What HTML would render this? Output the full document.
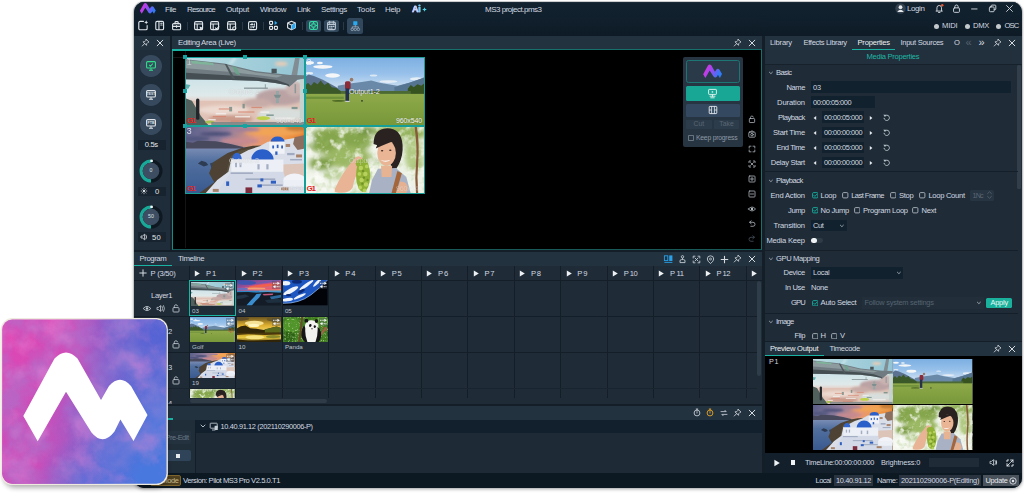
<!DOCTYPE html>
<html><head><meta charset="utf-8"><title>Pilot MS3</title>
<style>
html,body{margin:0;padding:0;background:#fff;}
body{width:1024px;height:498px;overflow:hidden;position:relative;font-family:"Liberation Sans",sans-serif;}
#win{position:absolute;left:134px;top:2px;width:888px;height:486px;border-radius:10px;background:#1b2733;overflow:hidden;box-shadow:0 0 0 1px rgba(185,188,190,.75),0 1.5px 3px .5px rgba(0,0,0,.22);}
#in{position:absolute;left:-134px;top:-2px;width:1024px;height:498px;}
#in div,#in span,#in svg,#ov>div,#ov>svg,#ov>span{position:absolute;}
.t{white-space:nowrap;display:block;}
#ov{position:absolute;left:0;top:0;}
</style></head><body>
<svg width="0" height="0" style="position:absolute"><defs>
<filter id="b1" x="-20%" y="-20%" width="140%" height="140%"><feGaussianBlur stdDeviation="0.8"/></filter>
<filter id="b2" x="-20%" y="-20%" width="140%" height="140%"><feGaussianBlur stdDeviation="2"/></filter>
<filter id="b3" x="-20%" y="-20%" width="140%" height="140%"><feGaussianBlur stdDeviation="3.5"/></filter>
<filter id="fol" x="0" y="0" width="100%" height="100%"><feTurbulence type="fractalNoise" baseFrequency="0.07" numOctaves="3" seed="4"/><feColorMatrix type="matrix" values="0 0 0 0 .36  0 0 0 0 .52  0 0 0 0 .18  3.5 0 0 0 -1.700"/></filter>
<filter id="fol2" x="0" y="0" width="100%" height="100%"><feTurbulence type="fractalNoise" baseFrequency="0.09" numOctaves="3" seed="11"/><feColorMatrix type="matrix" values="0 0 0 0 .97  0 0 0 0 .98  0 0 0 0 .94  0 3.500 0 0 -1.750"/></filter>
<filter id="fol3" x="0" y="0" width="100%" height="100%"><feTurbulence type="fractalNoise" baseFrequency="0.12" numOctaves="2" seed="5"/><feColorMatrix type="matrix" values="0 0 0 0 .12  0 0 0 0 .3  0 0 0 0 .06  3.5 0 0 0 -1.700"/></filter>
<filter id="fol4" x="0" y="0" width="100%" height="100%"><feTurbulence type="fractalNoise" baseFrequency="0.16" numOctaves="2" seed="19"/><feColorMatrix type="matrix" values="0 0 0 0 .8  0 0 0 0 .95  0 0 0 0 .6  0 4 0 0 -2.300"/></filter>
<linearGradient id="gs1" x1="0" y1="0" x2="1" y2="0"><stop offset="0" stop-color="#b9dbe2"/><stop offset=".5" stop-color="#a3cfda"/><stop offset="1" stop-color="#93c4d3"/></linearGradient>
<linearGradient id="gm1" x1="0" y1="0" x2="0" y2="1"><stop offset="0" stop-color="#cfe4e9"/><stop offset=".7" stop-color="#dfe9ea"/><stop offset="1" stop-color="#e6cfc6"/></linearGradient>
<linearGradient id="gsky2" x1="0" y1="0" x2="0" y2="1"><stop offset="0" stop-color="#7cafe2"/><stop offset=".25" stop-color="#98c1ea"/><stop offset=".42" stop-color="#c4daf0"/><stop offset=".55" stop-color="#dde8f2"/></linearGradient>
<linearGradient id="ggrass" x1="0" y1="0" x2="0" y2="1"><stop offset="0" stop-color="#8ea94a"/><stop offset=".5" stop-color="#83a141"/><stop offset="1" stop-color="#779739"/></linearGradient>
<linearGradient id="gsky3" x1="0" y1="0" x2="1" y2="0.15"><stop offset="0" stop-color="#5a5f8a"/><stop offset=".35" stop-color="#8f7d9c"/><stop offset=".6" stop-color="#e4987a"/><stop offset=".8" stop-color="#f09a4c"/><stop offset="1" stop-color="#e27d30"/></linearGradient>
<linearGradient id="gsea3" x1="0" y1="0" x2="0" y2="1"><stop offset="0" stop-color="#7d8fb6"/><stop offset=".3" stop-color="#52709f"/><stop offset="1" stop-color="#39598f"/></linearGradient>
<linearGradient id="gsky5" x1="0" y1="0" x2="1" y2="1"><stop offset="0" stop-color="#2f4aa6"/><stop offset=".5" stop-color="#c9508a"/><stop offset="1" stop-color="#f3a060"/></linearGradient>
<linearGradient id="gsky7" x1="0" y1="0" x2="0" y2="1"><stop offset="0" stop-color="#6b5520"/><stop offset=".6" stop-color="#e0b030"/><stop offset="1" stop-color="#f0d060"/></linearGradient>
<linearGradient id="gwat7" x1="0" y1="0" x2="0" y2="1"><stop offset="0" stop-color="#c09a20"/><stop offset=".5" stop-color="#e8c840"/><stop offset="1" stop-color="#5a4410"/></linearGradient>
</defs></svg>
<div id="win"><div id="in">
<div style="left:134px;top:2px;width:888px;height:34px;background:linear-gradient(#12222f,#10202c 40%,#0e1b27);"></div>
<div style="left:134px;top:2px;width:888px;height:1px;background:#1b2a37;"></div>
<svg style="left:139px;top:2px;" width="18" height="13" viewBox="0 0 18 13"><defs><linearGradient id="lg1" x1="0" y1="0" x2="1" y2="1"><stop offset="0" stop-color="#e93ad0"/><stop offset=".55" stop-color="#8a4cf0"/><stop offset="1" stop-color="#2f7cf6"/></linearGradient><linearGradient id="lg2" x1="0" y1="0" x2="1" y2=".35"><stop offset="0" stop-color="#f030d2"/><stop offset=".5" stop-color="#a046f0"/><stop offset="1" stop-color="#2f7cf6"/></linearGradient></defs><path transform="translate(.9,1.100) scale(.1276,.1200) translate(-23.300,-352.500)" d="M23.300,416 L54.500,358.500 Q66,346.500 77.500,358.500 L101,400 L109,386 Q120,373.500 131,386 L147.500,415 L133.500,441 L120.400,419.600 L114.500,431.500 Q103,446.500 91.500,432.500 L66,391.800 L37.700,441.300 Z" fill="url(#lg2)"/></svg>
<span class="t" style="left:165.00px;top:4.00px;font-size:8px;line-height:12px;color:#d2d9e0;letter-spacing:-0.473px;">File</span>
<span class="t" style="left:187.00px;top:4.00px;font-size:8px;line-height:12px;color:#d2d9e0;letter-spacing:-0.780px;">Resource</span>
<span class="t" style="left:226.00px;top:4.00px;font-size:8px;line-height:12px;color:#d2d9e0;letter-spacing:-0.169px;">Output</span>
<span class="t" style="left:260.00px;top:4.00px;font-size:8px;line-height:12px;color:#d2d9e0;letter-spacing:-0.409px;">Window</span>
<span class="t" style="left:297.00px;top:4.00px;font-size:8px;line-height:12px;color:#d2d9e0;letter-spacing:-0.419px;">Link</span>
<span class="t" style="left:321.00px;top:4.00px;font-size:8px;line-height:12px;color:#d2d9e0;letter-spacing:-0.363px;">Settings</span>
<span class="t" style="left:357.00px;top:4.00px;font-size:8px;line-height:12px;color:#d2d9e0;letter-spacing:-0.135px;">Tools</span>
<span class="t" style="left:385.00px;top:4.00px;font-size:8px;line-height:12px;color:#d2d9e0;letter-spacing:-0.363px;">Help</span>
<span class="t" style="left:411.9px;top:3.4px;font-size:9px;line-height:12px;font-weight:bold;color:#c6d2fb;letter-spacing:-0.2px;-webkit-text-stroke:.3px #c6d2fb;background:linear-gradient(200deg,#d4e6fd 45%,#a98cf4 85%);-webkit-background-clip:text;background-clip:text;">A<span style="position:static;color:#5fd0f0;-webkit-text-stroke:.3px #5fd0f0;">i</span></span>
<svg style="left:421.7px;top:6.5px;" width="5" height="5" viewBox="0 0 5 5"><path d="M2.5,.2 L3.150,1.850 L4.800,2.500 L3.150,3.150 L2.500,4.800 L1.850,3.150 L.2,2.500 L1.850,1.850Z" fill="#4fd0e4"/></svg>
<span class="t" style="left:485.00px;top:3.80px;font-size:8px;line-height:12px;color:#d2d9e0;letter-spacing:-0.498px;">MS3 project.pms3</span>
<svg style="left:894.7px;top:3px;" width="11" height="11" viewBox="0 0 11 11"><circle cx="5.5" cy="5.5" r="5.2" fill="#344250"/><circle cx="5.5" cy="4.2" r="1.9" fill="#e6eaee"/><path d="M2.2,9 q3.3,-4.4 6.6,0 z" fill="#e6eaee"/></svg>
<span class="t" style="left:907.00px;top:3.20px;font-size:8px;line-height:12px;color:#d2d9e0;letter-spacing:-0.415px;">Login</span>
<svg style="left:933.9px;top:3.4px;" width="11" height="11" viewBox="0 0 12 12"><path d="M3.2,8.6 v-3.4 a2.5,2.5 0 0 1 5,0 v3.4 M2.3,8.8 h6.8 M4.9,10.3 h1.6" fill="none" stroke="#d5dbe1" stroke-width="1" stroke-linecap="round" stroke-linejoin="round"/><circle cx="9" cy="2.4" r="1.3" fill="#f0552e"/></svg>
<svg style="left:951.2px;top:3.3px;" width="11" height="11" viewBox="0 0 12 12"><rect x="2.8" y="5.3" width="6.4" height="4.9" rx="1" fill="none" stroke="#d5dbe1" stroke-width="1" stroke-linecap="round" stroke-linejoin="round"/><path d="M4.2,5.2 v-1.2 a1.8,1.8 0 0 1 3.6,0 v1.2" fill="none" stroke="#d5dbe1" stroke-width="1" stroke-linecap="round" stroke-linejoin="round"/></svg>
<svg style="left:969px;top:2.6px;" width="11" height="11" viewBox="0 0 12 12"><path d="M2.8,6.5 h6" fill="none" stroke="#d5dbe1" stroke-width="1" stroke-linecap="round" stroke-linejoin="round"/></svg>
<svg style="left:986.6px;top:3.3px;" width="11" height="11" viewBox="0 0 12 12"><rect x="2.6" y="4.3" width="5.2" height="5.2" rx="1" fill="none" stroke="#d5dbe1" stroke-width="1" stroke-linecap="round" stroke-linejoin="round"/><path d="M4.6,4.1 v-1 a.8,.8 0 0 1 .8,-.8 h3.4 a.8,.8 0 0 1 .8,.8 v3.4 a.8,.8 0 0 1 -.8,.8 h-.9" fill="none" stroke="#d5dbe1" stroke-width="1" stroke-linecap="round" stroke-linejoin="round"/></svg>
<svg style="left:1004.2px;top:2.8px;" width="11" height="11" viewBox="0 0 12 12"><path d="M2.8,2.8 l6.4,6.4 M9.2,2.8 l-6.4,6.4" fill="none" stroke="#d5dbe1" stroke-width="1" stroke-linecap="round" stroke-linejoin="round"/></svg>
<div style="left:934.0px;top:23.6px;width:5px;height:5px;background:#c3c8cd;border-radius:50%;"></div>
<span class="t" style="left:942.00px;top:20.40px;font-size:7.6px;line-height:11.6px;color:#d2d9e0;letter-spacing:-0.149px;">MIDI</span>
<div style="left:964.5px;top:23.6px;width:5px;height:5px;background:#c3c8cd;border-radius:50%;"></div>
<span class="t" style="left:973.00px;top:20.40px;font-size:7.6px;line-height:11.6px;color:#d2d9e0;letter-spacing:-0.314px;">DMX</span>
<div style="left:995.5px;top:23.6px;width:5px;height:5px;background:#c3c8cd;border-radius:50%;"></div>
<span class="t" style="left:1004.50px;top:20.40px;font-size:7.6px;line-height:11.6px;color:#d2d9e0;letter-spacing:-0.841px;">OSC</span>
<svg style="left:136.1px;top:19.2px;" width="13" height="13" viewBox="0 0 14 14"><path d="M8,2.6 h-3.6 a1.4,1.4 0 0 0 -1.4,1.4 v6.2 a1.4,1.4 0 0 0 1.4,1.4 h6.2 a1.4,1.4 0 0 0 1.4,-1.4 v-3.2" fill="none" stroke="#dfe4e9" stroke-width="1.2" stroke-linecap="round" stroke-linejoin="round"/><path d="M11,1.4 l.6,1.6 l1.6,.6 l-1.6,.6 l-.6,1.6 l-.6,-1.6 l-1.6,-.6 l1.6,-.6z" fill="#dfe4e9"/></svg>
<svg style="left:153.29999999999998px;top:19.2px;" width="13" height="13" viewBox="0 0 14 14"><rect x="3" y="2.6" width="8.4" height="9" rx="1.4" fill="none" stroke="#dfe4e9" stroke-width="1.2" stroke-linecap="round" stroke-linejoin="round"/><path d="M6.4,2.8 v8.6 M8.4,4.6 h1.4 M8.4,6.4 h1.4" fill="none" stroke="#dfe4e9" stroke-width="1.2" stroke-linecap="round" stroke-linejoin="round"/></svg>
<svg style="left:170.1px;top:19.2px;" width="13" height="13" viewBox="0 0 14 14"><rect x="2.8" y="5" width="8.6" height="6.6" rx="1.2" fill="none" stroke="#dfe4e9" stroke-width="1.2" stroke-linecap="round" stroke-linejoin="round"/><path d="M5.4,5 v-1.2 a1,1 0 0 1 1,-1 h1.4 a1,1 0 0 1 1,1 v1.2 M2.8,8 h8.6 M7.1,7 v2" fill="none" stroke="#dfe4e9" stroke-width="1.2" stroke-linecap="round" stroke-linejoin="round"/></svg>
<div style="left:186.5px;top:22px;width:1px;height:8px;background:#2b3845;"></div>
<svg style="left:191.7px;top:19.2px;" width="13" height="13" viewBox="0 0 14 14"><rect x="2.8" y="2.8" width="8.6" height="8.6" rx="1.4" fill="none" stroke="#dfe4e9" stroke-width="1.2" stroke-linecap="round" stroke-linejoin="round"/><path d="M2.8,5.4 h8.6 M5.6,5.4 v6" fill="none" stroke="#dfe4e9" stroke-width="1.2" stroke-linecap="round" stroke-linejoin="round"/><path d="M8.2,8 l3.6,1.4 l-1.4,.5 l1.2,1.5 l-.9,.6 l-1.1,-1.6 l-1,1z" fill="#dfe4e9"/></svg>
<svg style="left:208.2px;top:19.2px;" width="13" height="13" viewBox="0 0 14 14"><rect x="2.8" y="2.8" width="8.6" height="8.6" rx="1.4" fill="none" stroke="#dfe4e9" stroke-width="1.2" stroke-linecap="round" stroke-linejoin="round"/><path d="M2.8,5.4 h8.6 M5.6,5.4 v6 M8,9.6 l1.2,1.2 l2.4,-2.6" fill="none" stroke="#dfe4e9" stroke-width="1.2" stroke-linecap="round" stroke-linejoin="round"/></svg>
<svg style="left:224.7px;top:19.2px;" width="13" height="13" viewBox="0 0 14 14"><rect x="2.8" y="2.8" width="8.6" height="8.6" rx="1.4" fill="none" stroke="#dfe4e9" stroke-width="1.2" stroke-linecap="round" stroke-linejoin="round"/><path d="M2.8,5.4 h8.6 M5.6,5.4 v6" fill="none" stroke="#dfe4e9" stroke-width="1.2" stroke-linecap="round" stroke-linejoin="round"/><circle cx="10" cy="10" r="1.7" fill="none" stroke="#dfe4e9" stroke-width="1.2" stroke-linecap="round" stroke-linejoin="round"/></svg>
<div style="left:241.5px;top:22px;width:1px;height:8px;background:#2b3845;"></div>
<svg style="left:246.2px;top:19.2px;" width="13" height="13" viewBox="0 0 14 14"><rect x="2.8" y="2.8" width="8.6" height="8.6" rx="1.4" fill="none" stroke="#dfe4e9" stroke-width="1.2" stroke-linecap="round" stroke-linejoin="round"/><path d="M5,6 h2.4 l-1,-1 M9.4,8.4 h-2.4 l1,1 M9,5.2 v1.6 M5.4,8 v1.6" fill="none" stroke="#dfe4e9" stroke-width="1.2" stroke-linecap="round" stroke-linejoin="round"/></svg>
<div style="left:263.3px;top:22px;width:1px;height:8px;background:#2b3845;"></div>
<svg style="left:267.2px;top:19.2px;" width="13" height="13" viewBox="0 0 14 14"><rect x="2.8" y="2.6" width="3.2" height="3.2" rx=".6" fill="none" stroke="#dfe4e9" stroke-width="1.2" stroke-linecap="round" stroke-linejoin="round"/><rect x="2.8" y="8" width="3.2" height="3.2" rx=".6" fill="none" stroke="#dfe4e9" stroke-width="1.2" stroke-linecap="round" stroke-linejoin="round"/><rect x="8" y="8" width="3.2" height="3.2" rx=".6" fill="none" stroke="#dfe4e9" stroke-width="1.2" stroke-linecap="round" stroke-linejoin="round"/><path d="M8.2,2 l3,2.2 l-3,2.2z" fill="#2aa8f0"/></svg>
<svg style="left:284.7px;top:19.2px;" width="13" height="13" viewBox="0 0 14 14"><path d="M7,2.4 l4.2,2 v5 l-4.2,2.2 l-4.2,-2.2 v-5z M2.8,4.4 l4.2,2.2 l4.2,-2.2 M7,6.6 v5" fill="none" stroke="#dfe4e9" stroke-width="1.2" stroke-linecap="round" stroke-linejoin="round"/><path d="M7,6.6 l4.2,-2.2 v5 l-4.2,2.2z" fill="#2aa8f0"/></svg>
<div style="left:301.6px;top:22px;width:1px;height:8px;background:#2b3845;"></div>
<div style="left:305.6px;top:20.2px;width:15px;height:11.6px;background:#31475b;border-radius:2.5px;"></div>
<svg style="left:306.9px;top:19.2px;" width="13" height="13" viewBox="0 0 14 14"><rect x="2.8" y="2.8" width="8.4" height="8.4" rx="1.6" fill="none" stroke="#34d8a4" stroke-width="1.2" stroke-linecap="round" stroke-linejoin="round"/><rect x="5.2" y="5.2" width="3.6" height="3.6" rx=".6" fill="none" stroke="#34d8a4" stroke-width="1.2" stroke-linecap="round" stroke-linejoin="round"/><path d="M7,2.8 v1.4 M7,9.8 v1.4 M2.8,7 h1.4 M9.8,7 h1.4" fill="none" stroke="#34d8a4" stroke-width="1.2" stroke-linecap="round" stroke-linejoin="round"/></svg>
<div style="left:324.4px;top:20.2px;width:14.6px;height:11.6px;background:#31475b;border-radius:2.5px;"></div>
<svg style="left:325.4px;top:19.2px;" width="13" height="13" viewBox="0 0 14 14"><rect x="2.8" y="3.4" width="8.4" height="8" rx="1.4" fill="none" stroke="#b9c6d2" stroke-width="1.2" stroke-linecap="round" stroke-linejoin="round"/><path d="M2.8,5.8 h8.4 M5,2.4 v2 M9,2.4 v2 M5,8 h.6 M7,8 h.6 M9,8 h.6 M5,9.8 h.6 M7,9.8 h.6" fill="none" stroke="#b9c6d2" stroke-width="1.2" stroke-linecap="round" stroke-linejoin="round"/></svg>
<div style="left:343.4px;top:22px;width:1px;height:8px;background:#2b3845;"></div>
<div style="left:347.2px;top:18px;width:16.2px;height:16px;background:#31475b;border-radius:2.5px;"></div>
<svg style="left:349px;top:20px;" width="12.6" height="12.6" viewBox="0 0 14 14"><rect x="4.700" y="1.400" width="4.600" height="4.400" rx=".6" fill="#2aa8f0"/><path d="M7,5.600 v2 M3.6,9 v-1.4 h6.8 v1.4" fill="none" stroke="#9fb0c2" stroke-width=".9"/><circle cx="3.6" cy="10.4" r="1.4" fill="none" stroke="#9fb0c2" stroke-width=".9"/><circle cx="7" cy="10.4" r="1.4" fill="none" stroke="#9fb0c2" stroke-width=".9"/><circle cx="10.4" cy="10.4" r="1.4" fill="none" stroke="#9fb0c2" stroke-width=".9"/></svg>
<div style="left:134px;top:36px;width:36px;height:214px;background:#1f2c39;"></div>
<div style="left:134px;top:36px;width:36px;height:13.5px;background:#23323f;"></div>
<svg style="left:141.4px;top:38.199999999999996px;" width="9.2" height="9.2" viewBox="0 0 10 10"><path d="M5.6,1.4 l3,3 l-1,.4 l-1.4,1.4 l-.2,1.8 l-3.8,-3.8 l1.8,-.2 l1.4,-1.4z M3.9,6.1 l-2.5,2.6" fill="none" stroke="#d5dbe1" stroke-width=".9" stroke-linejoin="round" stroke-linecap="round"/></svg>
<svg style="left:154.6px;top:37.8px;" width="10" height="10" viewBox="0 0 10 10"><path d="M2.2,2.2 L7.8,7.8 M7.8,2.2 L2.2,7.8" fill="none" stroke="#d5dbe1" stroke-width="1" stroke-linecap="round"/></svg>
<div style="left:140.2px;top:55.2px;width:21.6px;height:21.6px;background:#374a5d;border-radius:50%;"></div>
<svg style="left:145px;top:60px;" width="12" height="12" viewBox="0 0 12 12"><rect x="1.6" y="1.6" width="8.8" height="6.4" rx="1" fill="none" stroke="#2fe08a" stroke-width="1.1"/><path d="M4,10.3 h4 M6,8.2 v2" stroke="#2fe08a" stroke-width="1.1" fill="none"/><path d="M4.2,4.8 l1.3,1.3 l2.4,-2.6" stroke="#2fe08a" stroke-width="1.1" fill="none"/></svg>
<div style="left:140.2px;top:84.2px;width:21.6px;height:21.6px;background:#374a5d;border-radius:50%;"></div>
<svg style="left:145px;top:89px;" width="12" height="12" viewBox="0 0 12 12"><rect x="1.6" y="1.6" width="8.8" height="6.4" rx="1" fill="none" stroke="#dfe5ea" stroke-width="1.1"/><path d="M4,10.3 h4 M6,8.2 v2" stroke="#dfe5ea" stroke-width="1.1" fill="none"/><text x="6" y="5.900" font-size="3.300" font-weight="bold" text-anchor="middle" fill="#dfe5ea" font-family="Liberation Sans, sans-serif">TEST</text></svg>
<div style="left:140.2px;top:113.2px;width:21.6px;height:21.6px;background:#374a5d;border-radius:50%;"></div>
<svg style="left:145px;top:118px;" width="12" height="12" viewBox="0 0 12 12"><rect x="1.6" y="1.6" width="8.8" height="6.4" rx="1" fill="none" stroke="#dfe5ea" stroke-width="1.1"/><path d="M4,10.3 h4 M6,8.2 v2" stroke="#dfe5ea" stroke-width="1.1" fill="none"/><text x="6" y="6" font-size="3.600" font-weight="bold" text-anchor="middle" fill="#dfe5ea" font-family="Liberation Sans, sans-serif">FTB</text></svg>
<div style="left:137.5px;top:140px;width:28px;height:9.8px;background:#17232e;"></div>
<span class="t" style="left:144.80px;top:139.20px;font-size:7.6px;line-height:11.6px;color:#e3e8ec;letter-spacing:-0.353px;">0.5s</span>
<svg style="left:138px;top:157.6px;" width="26" height="26" viewBox="0 0 26 26"><circle cx="13" cy="13" r="9.900" fill="none" stroke="#0e1821" stroke-width="3.200"/><path d="M13,22.900 A9.900,9.900 0 0 1 13,3.100" fill="none" stroke="#19a999" stroke-width="3.200"/><circle cx="13" cy="13" r="8.300" fill="#3d4e62"/><circle cx="13.600" cy="2.900" r="1.400" fill="#f2f5f7"/></svg>
<span class="t" style="left:149.54px;top:166.00px;font-size:5.2px;line-height:9.2px;color:#dfe5ea;">0</span>
<div style="left:137.5px;top:186.5px;width:28px;height:9.6px;background:#17232e;"></div>
<svg style="left:140px;top:187.3px;" width="8" height="8" viewBox="0 0 8 8"><circle cx="4" cy="4" r="1.2" fill="#dfe5ea"/><path d="M4,.8 v1.4 M4,5.8 v1.4 M.8,4 h1.4 M5.8,4 h1.4 M1.7,1.7 l1,1 M5.3,5.3 l1,1 M6.3,1.7 l-1,1 M2.7,5.3 l-1,1" stroke="#dfe5ea" stroke-width=".7" fill="none"/></svg>
<span class="t" style="left:154.88px;top:185.60px;font-size:7.6px;line-height:11.6px;color:#e3e8ec;">0</span>
<svg style="left:138px;top:203.6px;" width="26" height="26" viewBox="0 0 26 26"><circle cx="13" cy="13" r="9.900" fill="none" stroke="#0e1821" stroke-width="3.200"/><path d="M13,22.900 A9.900,9.900 0 0 1 13,3.100" fill="none" stroke="#19a999" stroke-width="3.200"/><circle cx="13" cy="13" r="8.300" fill="#3d4e62"/><circle cx="13.600" cy="2.900" r="1.400" fill="#f2f5f7"/></svg>
<span class="t" style="left:148.08px;top:212.00px;font-size:5.2px;line-height:9.2px;color:#dfe5ea;">50</span>
<div style="left:137.5px;top:232.4px;width:28px;height:9.8px;background:#17232e;"></div>
<svg style="left:139.6px;top:233.3px;" width="9" height="8" viewBox="0 0 9 8"><path d="M1,3 h1.6 l2,-1.8 v5.6 l-2,-1.8 h-1.6z" fill="none" stroke="#dfe5ea" stroke-width=".8" stroke-linejoin="round"/><path d="M6,2 q1.4,2 0,4" fill="none" stroke="#dfe5ea" stroke-width=".8" stroke-linecap="round"/></svg>
<span class="t" style="left:152.10px;top:231.60px;font-size:7.6px;line-height:11.6px;color:#e3e8ec;letter-spacing:0.260px;">50</span>
<div style="left:170px;top:36px;width:2px;height:216px;background:#131e29;"></div>
<div style="left:134px;top:250px;width:630px;height:2px;background:#131e29;"></div>
<div style="left:762px;top:36px;width:3px;height:437px;background:#131e29;"></div>
<div style="left:172px;top:36px;width:590px;height:14px;background:#23323f;"></div>
<span class="t" style="left:178.00px;top:37.10px;font-size:7.8px;line-height:11.8px;color:#d2d9e0;letter-spacing:-0.307px;">Editing Area (Live)</span>
<svg style="left:732.9px;top:38.199999999999996px;" width="9.2" height="9.2" viewBox="0 0 10 10"><path d="M5.6,1.4 l3,3 l-1,.4 l-1.4,1.4 l-.2,1.8 l-3.8,-3.8 l1.8,-.2 l1.4,-1.4z M3.9,6.1 l-2.5,2.6" fill="none" stroke="#d5dbe1" stroke-width=".9" stroke-linejoin="round" stroke-linecap="round"/></svg>
<svg style="left:746.5px;top:37.8px;" width="10" height="10" viewBox="0 0 10 10"><path d="M2.2,2.2 L7.8,7.8 M7.8,2.2 L2.2,7.8" fill="none" stroke="#d5dbe1" stroke-width="1" stroke-linecap="round"/></svg>
<div style="left:172px;top:49px;width:590px;height:200.5px;background:#000;box-sizing:border-box;border:1px solid #148d84;border-top-color:#17706c;border-bottom-color:#175a58;border-right-color:#17706c;"></div>
<div style="left:172px;top:48.6px;width:68.5px;height:2px;background:#19b3a4;"></div>
<div style="left:185px;top:51px;width:1px;height:197px;background:#141414;"></div>
<div style="left:173px;top:57px;width:13px;height:1px;background:#1a1414;"></div>
<svg style="left:185.5px;top:57.4px;" width="119" height="68" viewBox="0 0 160 90" preserveAspectRatio="none">
<rect width="160" height="90" fill="#d6e6ea"/>
<rect width="160" height="34" fill="url(#gs1)"/>
<rect y="30" width="160" height="30" fill="url(#gm1)"/>
<rect y="58" width="160" height="32" fill="#e0c3b6"/>
<g filter="url(#b2)">
<ellipse cx="126" cy="53" rx="32" ry="11" fill="#bba3a4"/>
<ellipse cx="146" cy="42" rx="12" ry="10" fill="#c9b3b0"/>
<ellipse cx="96" cy="61" rx="20" ry="6" fill="#c7aca8"/>
<ellipse cx="50" cy="70" rx="34" ry="6" fill="#ecd9d0"/>
<ellipse cx="128" cy="9" rx="9" ry="3" fill="#e6cdb8"/>
<ellipse cx="63" cy="5" rx="8" ry="1.400" fill="#dceef1" transform="rotate(-50 63 5)"/>
<ellipse cx="130" cy="76" rx="34" ry="9" fill="#d8dedb"/>
<ellipse cx="60" cy="82" rx="30" ry="5" fill="#c99a8a"/>
</g>
<polygon points="147,0 153,0 148.600,30 140.500,30" fill="#818d92"/>
<polygon points="0,3 51,8.700 95,19 140,23.700 160,24 160,28.500 150,30 143,36 139,39.500 136,37.500 120,34.500 95,31.500 60,30.500 0,29.500" fill="#6f7b80"/>
<polygon points="0,4.500 50,10 94,20.500 130,24.500 122,27 60,20 0,15" fill="#8d9a9e"/>
<polygon points="0,21 60,24.500 96,27 122,30.500 138,36 139,39.500 136,37.500 120,34.500 95,31.500 60,30.500 0,29.500" fill="#454f53"/>
<polygon points="6,4.500 36,7.500 38,11 8,8.500" fill="#7fb39a"/>
<polygon points="62,12 68,13.500 73,24 67,22.500" fill="#68a58a" opacity=".85"/>
<polygon points="52,9 55,9.500 66,29 62,28.500" fill="#4d585c"/>
<rect x="115" y="15.500" width="7" height="6" fill="#4a5559"/>
<rect x="153" y="30" width="7" height="60" fill="#c5d3cf"/>
<rect x="146" y="36" width="2" height="12" fill="#8a9698"/>
<rect x="121" y="45" width="4" height="16" fill="#94a7a6"/>
<polygon points="118,50 128,50 126,54 120,54" fill="#7d908f"/>
<rect x="78" y="40.500" width="32" height="1.500" fill="#7d8c90"/>
<rect x="106" y="36" width="1.200" height="6" fill="#8a999c"/>
<polygon points="0,36 6,37 3,42 0,42" fill="#5fb0b0"/>
<polygon points="0,55 8,58 20,78 30,90 0,90" fill="#50605c"/>
<rect x="13.500" y="55" width="4.500" height="28" rx="2" fill="#22262a"/>
<g fill="#f4f1ee" opacity=".8"><rect x="40" y="74" width="14" height="2"/><rect x="66" y="78" width="20" height="2"/><rect x="100" y="72" width="12" height="2"/><rect x="120" y="80" width="26" height="2.500"/><rect x="30" y="82" width="10" height="2"/></g>
<g fill="#6d8b86" opacity=".8"><rect x="58" y="66" width="4" height="6"/><rect x="76" y="62" width="3" height="6"/><rect x="108" y="76" width="10" height="2"/><rect x="142" y="66" width="8" height="3"/></g>
<g fill="#d4806a" opacity=".75"><rect x="44" y="68" width="16" height="1.600"/><rect x="70" y="72" width="22" height="1.600"/><rect x="36" y="78" width="18" height="1.600"/><rect x="88" y="66" width="14" height="1.600"/><rect x="60" y="84" width="20" height="1.600"/></g>
<ellipse cx="104" cy="81" rx="9" ry="2.600" fill="#bdd248"/>
<ellipse cx="32" cy="86" rx="6" ry="2" fill="#a9bf52"/>
<rect x="34" y="86" width="126" height="4" fill="#727f82" opacity=".8"/>
</svg>
<svg style="left:305.4px;top:57.4px;" width="119.2" height="68" viewBox="0 0 160 90" preserveAspectRatio="none">
<rect width="160" height="90" fill="url(#gsky2)"/>
<g filter="url(#b1)" fill="#f4f6f8">
<ellipse cx="24" cy="13" rx="13" ry="2.400"/><ellipse cx="6" cy="7.500" rx="6" ry="2.200"/><ellipse cx="20" cy="8" rx="4" ry="1.600"/>
<ellipse cx="37" cy="24.500" rx="10" ry="3"/><ellipse cx="150" cy="29" rx="9" ry="2.200" opacity=".8"/>
<ellipse cx="112" cy="32.500" rx="12" ry="1.800" opacity=".75"/><ellipse cx="92" cy="24.500" rx="5" ry="1.300" opacity=".7"/>
<ellipse cx="6" cy="21.500" rx="5" ry="1.600" opacity=".85"/>
</g>
<polygon points="0,26 5,23 12,25 24,30 46,42 52,48 0,48" fill="#5b7390"/>
<polygon points="44,38 60,35 76,33 89,31 100,34 124,38 140,34 160,27 160,50 44,50" fill="#6a89a9"/>
<polygon points="120,40 140,34 152,30 160,27 160,50 120,50" fill="#55748f"/>
<polygon points="0,38 4,34 8,38 12,33 17,36 21,31 26,37 31,34 36,40 42,41 48,45 52,48 52,54 0,54" fill="#3b5829"/>
<polygon points="138,42 142,37 146,40 151,36 156,38 160,35 160,50 138,50" fill="#35521f"/>
<rect x="48" y="45" width="94" height="5" fill="#4c6a33"/>
<rect y="48.800" width="160" height="41.200" fill="url(#ggrass)"/>
<rect y="52.500" width="52" height="3" fill="#6d8f3a"/>
<ellipse cx="45" cy="58" rx="9" ry="1.200" fill="#4b6624"/>
<circle cx="76.500" cy="58" r="1.200" fill="#2c3a2a"/>
<rect x="53.700" y="32" width="7.500" height="11" rx="2.200" fill="#8c2b36"/>
<rect x="54.300" y="41.500" width="4.800" height="17.500" fill="#27314d"/>
<circle cx="62.500" cy="30" r="2.400" fill="#9a7a66"/>
<rect x="54" y="58" width="6" height="1.600" fill="#c9ccd0"/>
</svg>
<svg style="left:185.5px;top:126.2px;" width="119" height="67.4" viewBox="0 0 160 90" preserveAspectRatio="none">
<rect width="160" height="90" fill="url(#gsky3)"/>
<g filter="url(#b2)">
<ellipse cx="40" cy="10.500" rx="22" ry="2.600" fill="#474c76"/>
<ellipse cx="14" cy="17" rx="18" ry="3" fill="#4f547c"/>
<ellipse cx="118" cy="8" rx="40" ry="5" fill="#f2a455"/>
<ellipse cx="150" cy="3" rx="16" ry="4" fill="#c27a36"/>
<ellipse cx="72" cy="20" rx="26" ry="4" fill="#c68a90"/>
<ellipse cx="80" cy="5" rx="20" ry="3" fill="#a07f9a"/>
</g>
<rect y="28" width="90" height="62" fill="url(#gsea3)"/>
<polygon points="0,21 9,22.500 16,19.600 40,20.500 60,24 77,28 77,30 0,30" fill="#48495d"/>
<polygon points="16,50 21,46.500 27,48.500 30,52 24,54" fill="#2d3c52"/>
<polygon points="32,50 38,48 40,56 35,58" fill="#36455c"/>
<polygon points="76,29 90,26.500 102,26 86,44 66,66 40,90 17,90 38,75 31,63 37,48 56,36" fill="#4d4234"/>
<polygon points="60,40 72,33 86,30 80,44 60,58 52,70" fill="#5d5440" opacity=".8"/>
<polygon points="99,27 110,21 122,21 134,18 146,16 160,13 160,90 26,90 42,72 57,61 61,44 84,32" fill="#d9dee9"/>
<polygon points="146,15 160,12 160,30 150,32 144,24" fill="#8a6f60"/>
<polygon points="128.700,51.500 160,50 160,69 128.700,68" fill="#dcc4b8"/>
<polygon points="112,20.800 132.600,20.800 132.600,37 112,37" fill="#f0f2f7"/>
<path d="M87.500,45.700 a15.200,14.600 0 0 1 30.400,0 z" fill="#2a5fca"/>
<path d="M113.800,20.800 a9.400,6.800 0 0 1 18.800,0 z" fill="#2a5fca"/>
<path d="M62,44.700 a6.500,9 0 0 1 13,0 z" fill="#3366cc"/>
<rect x="61" y="44.700" width="70" height="17" fill="#eceff5"/>
<polygon points="61,61 131,61 140,90 40,90" fill="#d3d9e6"/>
<g fill="#8d99b3" opacity=".75"><rect x="66" y="49" width="2.500" height="6"/><rect x="72" y="49" width="2.500" height="6"/><rect x="96" y="51" width="3" height="7"/><rect x="108" y="51" width="3" height="7"/><rect x="60" y="62" width="30" height="2"/><rect x="80" y="70" width="40" height="2"/><rect x="100" y="78" width="30" height="2"/><rect x="136" y="36" width="10" height="3"/><rect x="140" y="44" width="16" height="2"/></g>
<g fill="#2f5fc0"><rect x="116" y="26" width="2.400" height="4"/><rect x="122" y="25" width="2.400" height="4.500"/><rect x="128" y="26" width="2.400" height="4"/><rect x="120" y="34" width="3" height="4.500"/><rect x="54" y="74" width="4" height="6"/><rect x="96" y="78" width="6" height="4"/><rect x="114" y="73" width="7" height="4"/><rect x="100" y="70" width="4" height="4"/></g>
<g fill="#a8836c"><rect x="134" y="24" width="6" height="4"/><rect x="148" y="38" width="8" height="4"/><rect x="128" y="82" width="10" height="4"/><rect x="36" y="84" width="8" height="4"/></g>
<rect x="80" y="82" width="9" height="8" fill="#7c2b3c"/>
<ellipse cx="146" cy="72" rx="15" ry="8.500" fill="#f1f3f8"/>
<rect x="131" y="72" width="29" height="9" fill="#eceff5"/>
</svg>
<svg style="left:305.4px;top:126.2px;" width="119.2" height="67.4" viewBox="0 0 160 90" preserveAspectRatio="none">
<rect width="160" height="90" fill="#edf2e6"/>
<g filter="url(#b3)">
<ellipse cx="44" cy="20" rx="46" ry="18" fill="#86a64e"/>
<ellipse cx="58" cy="42" rx="30" ry="15" fill="#9bb864"/>
<ellipse cx="128" cy="9" rx="36" ry="11" fill="#93b25a"/>
<ellipse cx="146" cy="40" rx="12" ry="22" fill="#b4cb86"/>
<ellipse cx="22" cy="50" rx="16" ry="9" fill="#7f9f48"/>
<ellipse cx="14" cy="78" rx="26" ry="13" fill="#f5f8f1"/>
<ellipse cx="5" cy="18" rx="6" ry="9" fill="#f1f5ea"/>
<ellipse cx="82" cy="6" rx="14" ry="5" fill="#6f9240"/>
<ellipse cx="40" cy="66" rx="14" ry="6" fill="#c5d6a4"/>
</g>
<rect width="160" height="90" filter="url(#fol)" opacity=".55"/>
<rect width="160" height="90" filter="url(#fol2)" opacity=".75"/>
<path d="M147,0 q4,30 2,50 q-2,20 0,40 l3,0 q-2,-22 0,-42 q2,-24 -2,-48z" fill="#8a5a3c"/>
<path d="M92,24 q0,-20 18,-21 q19,0 21,22 q1,14 -5,26 q-4,8 -9,11 l-6,-32 z" fill="#2a2221"/>
<ellipse cx="109.500" cy="36" rx="12.500" ry="17" fill="#e9b595"/>
<path d="M95,30 q5,-16 25,-10 q-10,3 -25,10z" fill="#2a2221"/>
<path d="M101,45.500 q8,5 14,-.5 q-7,2.500 -14,.5z" fill="#fff"/>
<ellipse cx="103.500" cy="33" rx="1.600" ry="1" fill="#3a2a26"/><ellipse cx="114.500" cy="32.500" rx="1.600" ry="1" fill="#3a2a26"/>
<path d="M98,57 l24,-1 l14,12 l6,22 l-56,0 l4,-18 z" fill="#a9b2c4"/>
<path d="M102,53 l15,0 l-1,15 l-13,0 z" fill="#e6b393"/>
<path d="M124,60 l6,3 l-8,27 l-6,0 z" fill="#a4653a"/>
<path d="M40,84 q10,-22 26,-40 q4,-6 10,-2 l4,6 q-14,18 -16,34 q-6,10 -24,6 z" fill="#e8b495"/>
<path d="M128,74 q10,0 10,10 l-2,6 l-14,0 z" fill="#e6b191"/>
<g fill="#8fb136"><ellipse cx="78" cy="66" rx="9.500" ry="22"/><ellipse cx="75" cy="50" rx="7" ry="6"/></g>
<g fill="#b7d25c"><circle cx="75" cy="56" r="3"/><circle cx="81" cy="64" r="3"/><circle cx="76" cy="72" r="3"/><circle cx="82" cy="78" r="3"/><circle cx="74" cy="82" r="2.500"/><circle cx="83" cy="54" r="2.500"/><circle cx="73" cy="64" r="2.500"/><circle cx="80" cy="86" r="2.500"/></g>
<g fill="#6f9126"><circle cx="78" cy="60" r="1.600"/><circle cx="79" cy="69" r="1.600"/><circle cx="77" cy="77" r="1.600"/><circle cx="84" cy="72" r="1.600"/></g>
</svg>
<div style="left:184.9px;top:56.8px;width:120.2px;height:69.2px;background:transparent;box-sizing:border-box;border:1.2px solid #169f98;"></div>
<div style="left:304.79999999999995px;top:56.8px;width:120.4px;height:69.2px;background:transparent;box-sizing:border-box;border:1.2px solid #169f98;"></div>
<div style="left:184.9px;top:125.60000000000001px;width:120.2px;height:68.60000000000001px;background:transparent;box-sizing:border-box;border:1.2px solid #169f98;"></div>
<div style="left:304.79999999999995px;top:125.60000000000001px;width:120.4px;height:68.60000000000001px;background:transparent;box-sizing:border-box;border:1.2px solid #169f98;"></div>
<div style="left:183.3px;top:55.2px;width:4px;height:4px;background:#18a3a3;"></div>
<div style="left:183.3px;top:89.3px;width:4px;height:4px;background:#18a3a3;"></div>
<div style="left:183.3px;top:123.6px;width:4px;height:4px;background:#18a3a3;"></div>
<div style="left:243px;top:55.2px;width:4px;height:4px;background:#18a3a3;"></div>
<div style="left:243px;top:123.6px;width:4px;height:4px;background:#18a3a3;"></div>
<div style="left:302.8px;top:55.2px;width:4px;height:4px;background:#18a3a3;"></div>
<div style="left:302.8px;top:89.3px;width:4px;height:4px;background:#18a3a3;"></div>
<div style="left:302.8px;top:123.6px;width:4px;height:4px;background:#18a3a3;"></div>
<span class="t" style="left:229.00px;top:86.20px;font-size:7.2px;line-height:11.2px;color:#f4f6f8;letter-spacing:-0.248px;text-shadow:0 0 1px rgba(0,0,0,.35);opacity:.75;">Output1-1</span>
<span class="t" style="left:349.00px;top:86.20px;font-size:7.2px;line-height:11.2px;color:#f4f6f8;letter-spacing:-0.137px;text-shadow:0 0 1px rgba(0,0,0,.35);">Output1-2</span>
<span class="t" style="left:229.00px;top:155.00px;font-size:7.2px;line-height:11.2px;color:#f4f6f8;letter-spacing:-0.248px;text-shadow:0 0 1px rgba(0,0,0,.35);opacity:.7;">Output1-3</span>
<span class="t" style="left:349.00px;top:155.00px;font-size:7.2px;line-height:11.2px;color:#f4f6f8;letter-spacing:-0.248px;text-shadow:0 0 1px rgba(0,0,0,.35);opacity:.45;">Output1-4</span>
<span class="t" style="left:186.80px;top:55.60px;font-size:8.8px;line-height:12.8px;color:#f4f6f8;opacity:.5;">1</span>
<span class="t" style="left:306.60px;top:55.60px;font-size:8.8px;line-height:12.8px;color:#f4f6f8;opacity:.85;">2</span>
<span class="t" style="left:186.80px;top:124.50px;font-size:8.8px;line-height:12.8px;color:#f4f6f8;opacity:.85;">3</span>
<span class="t" style="left:186.40px;top:114.90px;font-size:8px;line-height:12px;color:#e22424;letter-spacing:-1.136px;font-weight:bold;">G1</span>
<span class="t" style="left:306.40px;top:114.90px;font-size:8px;line-height:12px;color:#e22424;letter-spacing:-1.136px;font-weight:bold;">G1</span>
<span class="t" style="left:186.40px;top:182.90px;font-size:8px;line-height:12px;color:#e22424;letter-spacing:-1.136px;font-weight:bold;">G1</span>
<span class="t" style="left:306.40px;top:182.90px;font-size:8px;line-height:12px;color:#e22424;letter-spacing:-1.136px;font-weight:bold;">G1</span>
<span class="t" style="left:396.00px;top:115.30px;font-size:7px;line-height:11px;color:#f4f6f8;letter-spacing:-0.122px;text-shadow:0 0 1px rgba(0,0,0,.35);">960x540</span>
<span class="t" style="left:276.00px;top:115.30px;font-size:7px;line-height:11px;color:#f4f6f8;letter-spacing:-0.122px;text-shadow:0 0 1px rgba(0,0,0,.35);opacity:.75;">960x540</span>
<span class="t" style="left:276.00px;top:183.30px;font-size:7px;line-height:11px;color:#f4f6f8;letter-spacing:-0.122px;text-shadow:0 0 1px rgba(0,0,0,.35);opacity:.55;">960x540</span>
<span class="t" style="left:396.00px;top:183.30px;font-size:7px;line-height:11px;color:#f4f6f8;letter-spacing:-0.122px;text-shadow:0 0 1px rgba(0,0,0,.35);opacity:.4;">960x540</span>
<div style="left:682.5px;top:57px;width:60px;height:89.5px;background:#273542;border-radius:2px;"></div>
<div style="left:686px;top:59.9px;width:53.5px;height:23.4px;background:#2b3a48;box-sizing:border-box;border:1px solid #1d7674;border-radius:2.500px;"></div>
<svg style="left:701px;top:63px;" width="24" height="16" viewBox="0 0 24 16"><path transform="translate(2.200,1.600) scale(.1515,.1500) translate(-23.300,-352.500)" d="M23.300,416 L54.500,358.500 Q66,346.500 77.500,358.500 L101,400 L109,386 Q120,373.500 131,386 L147.500,415 L133.500,441 L120.400,419.600 L114.500,431.500 Q103,446.500 91.500,432.500 L66,391.800 L37.700,441.300 Z" fill="url(#lg2)"/></svg>
<div style="left:686px;top:86px;width:53.5px;height:15.3px;background:#19a795;border-radius:1.5px;"></div>
<svg style="left:707px;top:88px;" width="11" height="11" viewBox="0 0 11 11"><rect x="1.6" y="1.4" width="7.8" height="5" rx=".6" fill="none" stroke="#e9f6f3" stroke-width=".9"/><path d="M5.5,6.4 v2.4 M2.6,8.2 h5.8 M3.4,9.8 h4.2" stroke="#e9f6f3" stroke-width=".9" fill="none"/><path d="M4.8,2.8 l1.8,1.1 l-1.8,1.1z" fill="#e9f6f3"/></svg>
<div style="left:686px;top:103.6px;width:53.5px;height:13.6px;background:#34495f;border-radius:1.5px;"></div>
<svg style="left:707.5px;top:105.2px;" width="10" height="10" viewBox="0 0 10 10"><rect x="1.2" y="1.4" width="7.6" height="7.2" rx=".6" fill="none" stroke="#e6ebf0" stroke-width=".9"/><path d="M3.6,1.4 v7.2 M6.4,1.4 v7.2 M1.2,5 h2.4 M6.4,5 h2.4" stroke="#e6ebf0" stroke-width=".8" fill="none"/></svg>
<div style="left:686px;top:120px;width:25.5px;height:9.4px;background:#2d3c4a;border-radius:1px;"></div>
<div style="left:713.6px;top:120px;width:25.9px;height:9.4px;background:#2d3c4a;border-radius:1px;"></div>
<span class="t" style="left:693.55px;top:119.40px;font-size:6.8px;line-height:10.8px;color:#596776;">Cut</span>
<span class="t" style="left:719.37px;top:119.40px;font-size:6.8px;line-height:10.8px;color:#596776;">Take</span>
<div style="left:688px;top:135px;width:5.5px;height:5.5px;background:transparent;box-sizing:border-box;border:.8px solid #687480;border-radius:.8px;"></div>
<span class="t" style="left:696.00px;top:132.60px;font-size:6.8px;line-height:10.8px;color:#8d99a5;letter-spacing:-0.223px;">Keep progress</span>
<svg style="left:747.4px;top:113.5px;" width="10" height="10" viewBox="0 0 11 11"><rect x="2.6" y="5" width="5.8" height="4.4" rx=".8" fill="none" stroke="#aab3bc" stroke-width=".9" stroke-linecap="round" stroke-linejoin="round"/><path d="M3.8,5 v-1 a1.7,1.7 0 0 1 3.3,-.6" fill="none" stroke="#aab3bc" stroke-width=".9" stroke-linecap="round" stroke-linejoin="round"/></svg>
<svg style="left:747.4px;top:128.5px;" width="10" height="10" viewBox="0 0 11 11"><rect x="2" y="3.4" width="7" height="5.6" rx=".8" fill="none" stroke="#aab3bc" stroke-width=".9" stroke-linecap="round" stroke-linejoin="round"/><circle cx="5.5" cy="6.2" r="1.4" fill="none" stroke="#aab3bc" stroke-width=".9" stroke-linecap="round" stroke-linejoin="round"/><path d="M4,3.2 l.6,-1 h1.8 l.6,1" fill="none" stroke="#aab3bc" stroke-width=".9" stroke-linecap="round" stroke-linejoin="round"/></svg>
<svg style="left:747.4px;top:143.5px;" width="10" height="10" viewBox="0 0 11 11"><path d="M2.4,4.4 v-2 h2 M8.6,4.4 v-2 h-2 M2.4,6.6 v2 h2 M8.6,6.6 v2 h-2" fill="none" stroke="#aab3bc" stroke-width=".9" stroke-linecap="round" stroke-linejoin="round"/></svg>
<svg style="left:747.4px;top:158.5px;" width="10" height="10" viewBox="0 0 11 11"><path d="M2.2,4 v-1.8 h1.8 M8.8,4 v-1.8 h-1.8 M2.2,7 v1.8 h1.8 M8.8,7 v1.8 h-1.8 M4,4 l3,3 M7,4 l-3,3" fill="none" stroke="#aab3bc" stroke-width=".9" stroke-linecap="round" stroke-linejoin="round"/></svg>
<svg style="left:747.4px;top:173.5px;" width="10" height="10" viewBox="0 0 11 11"><rect x="2.2" y="2.2" width="6.6" height="6.6" rx=".8" fill="none" stroke="#aab3bc" stroke-width=".9" stroke-linecap="round" stroke-linejoin="round"/><path d="M5.5,3.8 v3.4 M3.8,5.5 h3.4" fill="none" stroke="#aab3bc" stroke-width=".9" stroke-linecap="round" stroke-linejoin="round"/></svg>
<svg style="left:747.4px;top:188.5px;" width="10" height="10" viewBox="0 0 11 11"><rect x="2.2" y="2.2" width="6.6" height="6.6" rx=".8" fill="none" stroke="#aab3bc" stroke-width=".9" stroke-linecap="round" stroke-linejoin="round"/><path d="M3.8,5.5 h3.4" fill="none" stroke="#aab3bc" stroke-width=".9" stroke-linecap="round" stroke-linejoin="round"/></svg>
<svg style="left:747.4px;top:203.5px;" width="10" height="10" viewBox="0 0 11 11"><path d="M1.6,5.5 q3.9,-4.4 7.8,0 q-3.9,4.4 -7.8,0z" fill="none" stroke="#aab3bc" stroke-width=".9" stroke-linecap="round" stroke-linejoin="round"/><circle cx="5.5" cy="5.5" r="1.3" fill="#b8c0c8"/></svg>
<svg style="left:747.4px;top:218.5px;" width="10" height="10" viewBox="0 0 11 11"><path d="M3,3.6 h3.6 a2.2,2.2 0 0 1 0,4.4 h-2.4 M4.6,2 l-1.8,1.6 l1.8,1.6" fill="none" stroke="#aab3bc" stroke-width=".9" stroke-linecap="round" stroke-linejoin="round"/></svg>
<svg style="left:747.4px;top:233.5px;" width="10" height="10" viewBox="0 0 11 11"><path d="M8,3.6 h-3.6 a2.2,2.2 0 0 0 0,4.4 h2.4 M6.4,2 l1.8,1.6 l-1.8,1.6" fill="none" stroke="#46525e" stroke-width=".9" stroke-linecap="round" stroke-linejoin="round"/></svg>
<div style="left:134px;top:252px;width:628px;height:153px;background:#1f2b37;"></div>
<div style="left:134px;top:252px;width:628px;height:14px;background:#23323f;"></div>
<span class="t" style="left:139.50px;top:253.10px;font-size:7.8px;line-height:11.8px;color:#d2d9e0;letter-spacing:-0.460px;">Program</span>
<span class="t" style="left:178.00px;top:253.10px;font-size:7.8px;line-height:11.8px;color:#d2d9e0;letter-spacing:-0.375px;">Timeline</span>
<div style="left:134px;top:264.8px;width:38px;height:1.6px;background:#19b3a4;"></div>
<svg style="left:663px;top:254px;" width="11" height="10" viewBox="0 0 11 10"><rect x="1.4" y="1.8" width="3.4" height="4.8" fill="none" stroke="#2aa0e8" stroke-width=".9"/><rect x="6.2" y="1.4" width="3.2" height="5.6" fill="#2aa0e8"/><path d="M1.4,8.4 h8" stroke="#2aa0e8" stroke-width=".9"/></svg>
<svg style="left:676.5px;top:253.5px;" width="11" height="11" viewBox="0 0 11 11"><circle cx="5.5" cy="2.8" r="1.2" fill="none" stroke="#c4ccd4" stroke-width=".9"/><path d="M5.5,4 v1.6 M3,8.6 v-1.6 a1.4,1.4 0 0 1 1.4,-1.4 h2.2 a1.4,1.4 0 0 1 1.400,1.4 v1.6z" fill="none" stroke="#c4ccd4" stroke-width=".9" stroke-linejoin="round"/></svg>
<svg style="left:690.5px;top:253.5px;" width="11" height="11" viewBox="0 0 11 11"><path d="M2.2,4 v-1.8 h1.8 M8.8,4 v-1.8 h-1.8 M2.2,7 v1.8 h1.8 M8.8,7 v1.8 h-1.8 M4,4 l3,3 M7,4 l-3,3" fill="none" stroke="#c4ccd4" stroke-width=".9" stroke-linecap="round"/></svg>
<svg style="left:704.5px;top:253.5px;" width="11" height="11" viewBox="0 0 11 11"><path d="M5.500,9.600 q-3.200,-2.600 -3.200,-4.600 a3.200,3.200 0 0 1 6.400,0 q0,2 -3.200,4.600z" fill="none" stroke="#c4ccd4" stroke-width=".9"/><circle cx="5.500" cy="5" r="1" fill="none" stroke="#c4ccd4" stroke-width=".8"/></svg>
<svg style="left:718.5px;top:253.5px;" width="11" height="11" viewBox="0 0 11 11"><path d="M5.500,2.200 v6.600 M2.200,5.500 h6.600" fill="none" stroke="#d5dbe1" stroke-width="1.100" stroke-linecap="round"/></svg>
<svg style="left:733.4px;top:254.4px;" width="9.2" height="9.2" viewBox="0 0 10 10"><path d="M5.6,1.4 l3,3 l-1,.4 l-1.4,1.4 l-.2,1.8 l-3.8,-3.8 l1.8,-.2 l1.4,-1.4z M3.9,6.1 l-2.5,2.6" fill="none" stroke="#d5dbe1" stroke-width=".9" stroke-linejoin="round" stroke-linecap="round"/></svg>
<svg style="left:747px;top:254px;" width="10" height="10" viewBox="0 0 10 10"><path d="M2.2,2.2 L7.8,7.8 M7.8,2.2 L2.2,7.8" fill="none" stroke="#d5dbe1" stroke-width="1" stroke-linecap="round"/></svg>
<div style="left:134px;top:266.4px;width:628px;height:13.6px;background:#1f2c38;"></div>
<div style="left:134px;top:279.6px;width:628px;height:1px;background:#141e28;"></div>
<svg style="left:138px;top:268.4px;" width="10" height="10" viewBox="0 0 10 10"><path d="M5,1.800 v6.400 M1.800,5 h6.400" fill="none" stroke="#d5dbe1" stroke-width="1" stroke-linecap="round"/></svg>
<span class="t" style="left:150.60px;top:267.50px;font-size:7.6px;line-height:11.6px;color:#d2d9e0;letter-spacing:-0.248px;">P (3/50)</span>
<div style="left:189.0px;top:266.4px;width:1px;height:131.6px;background:#141e28;"></div>
<svg style="left:194.3px;top:269.6px;" width="7" height="7" viewBox="0 0 7 7"><path d="M.8,.6 l5,2.900 l-5,2.900z" fill="#eef1f4"/></svg>
<span class="t" style="left:206.10px;top:267.50px;font-size:7.6px;line-height:11.6px;color:#d2d9e0;letter-spacing:-0.602px;">P 1</span>
<div style="left:235.4px;top:266.4px;width:1px;height:131.6px;background:#141e28;"></div>
<svg style="left:240.70000000000002px;top:269.6px;" width="7" height="7" viewBox="0 0 7 7"><path d="M.8,.6 l5,2.900 l-5,2.900z" fill="#eef1f4"/></svg>
<span class="t" style="left:252.50px;top:267.50px;font-size:7.6px;line-height:11.6px;color:#d2d9e0;letter-spacing:-0.602px;">P 2</span>
<div style="left:281.8px;top:266.4px;width:1px;height:131.6px;background:#141e28;"></div>
<svg style="left:287.1px;top:269.6px;" width="7" height="7" viewBox="0 0 7 7"><path d="M.8,.6 l5,2.900 l-5,2.900z" fill="#eef1f4"/></svg>
<span class="t" style="left:298.90px;top:267.50px;font-size:7.6px;line-height:11.6px;color:#d2d9e0;letter-spacing:-0.602px;">P 3</span>
<div style="left:328.2px;top:266.4px;width:1px;height:131.6px;background:#141e28;"></div>
<svg style="left:333.5px;top:269.6px;" width="7" height="7" viewBox="0 0 7 7"><path d="M.8,.6 l5,2.900 l-5,2.900z" fill="#eef1f4"/></svg>
<span class="t" style="left:345.30px;top:267.50px;font-size:7.6px;line-height:11.6px;color:#d2d9e0;letter-spacing:-0.602px;">P 4</span>
<div style="left:374.6px;top:266.4px;width:1px;height:131.6px;background:#141e28;"></div>
<svg style="left:379.90000000000003px;top:269.6px;" width="7" height="7" viewBox="0 0 7 7"><path d="M.8,.6 l5,2.900 l-5,2.900z" fill="#eef1f4"/></svg>
<span class="t" style="left:391.70px;top:267.50px;font-size:7.6px;line-height:11.6px;color:#d2d9e0;letter-spacing:-0.602px;">P 5</span>
<div style="left:421.0px;top:266.4px;width:1px;height:131.6px;background:#141e28;"></div>
<svg style="left:426.3px;top:269.6px;" width="7" height="7" viewBox="0 0 7 7"><path d="M.8,.6 l5,2.900 l-5,2.900z" fill="#eef1f4"/></svg>
<span class="t" style="left:438.10px;top:267.50px;font-size:7.6px;line-height:11.6px;color:#d2d9e0;letter-spacing:-0.602px;">P 6</span>
<div style="left:467.4px;top:266.4px;width:1px;height:131.6px;background:#141e28;"></div>
<svg style="left:472.7px;top:269.6px;" width="7" height="7" viewBox="0 0 7 7"><path d="M.8,.6 l5,2.900 l-5,2.900z" fill="#eef1f4"/></svg>
<span class="t" style="left:484.50px;top:267.50px;font-size:7.6px;line-height:11.6px;color:#d2d9e0;letter-spacing:-0.602px;">P 7</span>
<div style="left:513.8px;top:266.4px;width:1px;height:131.6px;background:#141e28;"></div>
<svg style="left:519.0999999999999px;top:269.6px;" width="7" height="7" viewBox="0 0 7 7"><path d="M.8,.6 l5,2.900 l-5,2.900z" fill="#eef1f4"/></svg>
<span class="t" style="left:530.90px;top:267.50px;font-size:7.6px;line-height:11.6px;color:#d2d9e0;letter-spacing:-0.602px;">P 8</span>
<div style="left:560.2px;top:266.4px;width:1px;height:131.6px;background:#141e28;"></div>
<svg style="left:565.5px;top:269.6px;" width="7" height="7" viewBox="0 0 7 7"><path d="M.8,.6 l5,2.900 l-5,2.900z" fill="#eef1f4"/></svg>
<span class="t" style="left:577.30px;top:267.50px;font-size:7.6px;line-height:11.6px;color:#d2d9e0;letter-spacing:-0.602px;">P 9</span>
<div style="left:606.5999999999999px;top:266.4px;width:1px;height:131.6px;background:#141e28;"></div>
<svg style="left:611.8999999999999px;top:269.6px;" width="7" height="7" viewBox="0 0 7 7"><path d="M.8,.6 l5,2.900 l-5,2.900z" fill="#eef1f4"/></svg>
<span class="t" style="left:623.70px;top:267.50px;font-size:7.6px;line-height:11.6px;color:#d2d9e0;letter-spacing:-0.512px;">P 10</span>
<div style="left:653.0px;top:266.4px;width:1px;height:131.6px;background:#141e28;"></div>
<svg style="left:658.3px;top:269.6px;" width="7" height="7" viewBox="0 0 7 7"><path d="M.8,.6 l5,2.900 l-5,2.900z" fill="#eef1f4"/></svg>
<span class="t" style="left:670.10px;top:267.50px;font-size:7.6px;line-height:11.6px;color:#d2d9e0;letter-spacing:-0.370px;">P 11</span>
<div style="left:699.4px;top:266.4px;width:1px;height:131.6px;background:#141e28;"></div>
<svg style="left:704.6999999999999px;top:269.6px;" width="7" height="7" viewBox="0 0 7 7"><path d="M.8,.6 l5,2.900 l-5,2.900z" fill="#eef1f4"/></svg>
<span class="t" style="left:716.50px;top:267.50px;font-size:7.6px;line-height:11.6px;color:#d2d9e0;letter-spacing:-0.512px;">P 12</span>
<div style="left:745.8px;top:266.4px;width:1px;height:131.6px;background:#141e28;"></div>
<svg style="left:751.0999999999999px;top:269.6px;" width="7" height="7" viewBox="0 0 7 7"><path d="M.8,.6 l5,2.900 l-5,2.900z" fill="#eef1f4"/></svg>
<div style="left:134px;top:315.5px;width:623px;height:1px;background:#141e28;"></div>
<div style="left:134px;top:351.8px;width:623px;height:1px;background:#141e28;"></div>
<div style="left:134px;top:387.7px;width:623px;height:1px;background:#19242f;"></div>
<span class="t" style="left:151.10px;top:289.80px;font-size:7.6px;line-height:11.6px;color:#d2d9e0;letter-spacing:-0.385px;">Layer1</span>
<svg style="left:141.5px;top:304.1px;" width="10" height="9" viewBox="0 0 10 9"><path d="M1.200,4.500 q3.800,-4.200 7.600,0 q-3.800,4.200 -7.600,0z" fill="none" stroke="#c4ccd4" stroke-width=".85"/><circle cx="5" cy="4.500" r="1.200" fill="#c4ccd4"/></svg>
<svg style="left:156px;top:304.1px;" width="10" height="9" viewBox="0 0 10 9"><path d="M1,3.400 h1.500 l2,-1.800 v5.800 l-2,-1.800 h-1.500z" fill="none" stroke="#c4ccd4" stroke-width=".8" stroke-linejoin="round"/><path d="M6,2.200 q1.500,2.300 0,4.600 M7.600,1.600 q1.900,2.900 0,5.800" fill="none" stroke="#c4ccd4" stroke-width=".8" stroke-linecap="round"/></svg>
<svg style="left:171px;top:303.1px;" width="10" height="10" viewBox="0 0 10 10"><rect x="2" y="4.600" width="6" height="4.400" rx=".8" fill="none" stroke="#c4ccd4" stroke-width=".85"/><path d="M3.300,4.600 v-1.200 a1.700,1.700 0 0 1 3.300,-.5" fill="none" stroke="#c4ccd4" stroke-width=".85" stroke-linecap="round"/></svg>
<svg style="left:171px;top:339.3px;" width="10" height="10" viewBox="0 0 10 10"><rect x="2" y="4.600" width="6" height="4.400" rx=".8" fill="none" stroke="#c4ccd4" stroke-width=".85"/><path d="M3.300,4.600 v-1.200 a1.700,1.700 0 0 1 3.300,-.5" fill="none" stroke="#c4ccd4" stroke-width=".85" stroke-linecap="round"/></svg>
<svg style="left:171px;top:375.3px;" width="10" height="10" viewBox="0 0 10 10"><rect x="2" y="4.600" width="6" height="4.400" rx=".8" fill="none" stroke="#c4ccd4" stroke-width=".85"/><path d="M3.300,4.600 v-1.200 a1.700,1.700 0 0 1 3.300,-.5" fill="none" stroke="#c4ccd4" stroke-width=".85" stroke-linecap="round"/></svg>
<span class="t" style="left:167.88px;top:325.70px;font-size:7.6px;line-height:11.6px;color:#d2d9e0;">2</span>
<span class="t" style="left:167.88px;top:361.70px;font-size:7.6px;line-height:11.6px;color:#d2d9e0;">3</span>
<span class="t" style="left:167.88px;top:398.40px;font-size:7.6px;line-height:11.6px;color:#d2d9e0;">4</span>
<div style="left:189.3px;top:280.2px;width:46.4px;height:35.8px;background:#1f2d39;box-sizing:border-box;border:1.100px solid #18b5a3;"></div>
<svg style="left:191.0px;top:281.6px;" width="43.2" height="24.4" viewBox="0 0 160 90" preserveAspectRatio="none">
<rect width="160" height="90" fill="#d6e6ea"/>
<rect width="160" height="34" fill="url(#gs1)"/>
<rect y="30" width="160" height="30" fill="url(#gm1)"/>
<rect y="58" width="160" height="32" fill="#e0c3b6"/>
<g filter="url(#b2)">
<ellipse cx="126" cy="53" rx="32" ry="11" fill="#bba3a4"/>
<ellipse cx="146" cy="42" rx="12" ry="10" fill="#c9b3b0"/>
<ellipse cx="96" cy="61" rx="20" ry="6" fill="#c7aca8"/>
<ellipse cx="50" cy="70" rx="34" ry="6" fill="#ecd9d0"/>
<ellipse cx="128" cy="9" rx="9" ry="3" fill="#e6cdb8"/>
<ellipse cx="63" cy="5" rx="8" ry="1.400" fill="#dceef1" transform="rotate(-50 63 5)"/>
<ellipse cx="130" cy="76" rx="34" ry="9" fill="#d8dedb"/>
<ellipse cx="60" cy="82" rx="30" ry="5" fill="#c99a8a"/>
</g>
<polygon points="147,0 153,0 148.600,30 140.500,30" fill="#818d92"/>
<polygon points="0,3 51,8.700 95,19 140,23.700 160,24 160,28.500 150,30 143,36 139,39.500 136,37.500 120,34.500 95,31.500 60,30.500 0,29.500" fill="#6f7b80"/>
<polygon points="0,4.500 50,10 94,20.500 130,24.500 122,27 60,20 0,15" fill="#8d9a9e"/>
<polygon points="0,21 60,24.500 96,27 122,30.500 138,36 139,39.500 136,37.500 120,34.500 95,31.500 60,30.500 0,29.500" fill="#454f53"/>
<polygon points="6,4.500 36,7.500 38,11 8,8.500" fill="#7fb39a"/>
<polygon points="62,12 68,13.500 73,24 67,22.500" fill="#68a58a" opacity=".85"/>
<polygon points="52,9 55,9.500 66,29 62,28.500" fill="#4d585c"/>
<rect x="115" y="15.500" width="7" height="6" fill="#4a5559"/>
<rect x="153" y="30" width="7" height="60" fill="#c5d3cf"/>
<rect x="146" y="36" width="2" height="12" fill="#8a9698"/>
<rect x="121" y="45" width="4" height="16" fill="#94a7a6"/>
<polygon points="118,50 128,50 126,54 120,54" fill="#7d908f"/>
<rect x="78" y="40.500" width="32" height="1.500" fill="#7d8c90"/>
<rect x="106" y="36" width="1.200" height="6" fill="#8a999c"/>
<polygon points="0,36 6,37 3,42 0,42" fill="#5fb0b0"/>
<polygon points="0,55 8,58 20,78 30,90 0,90" fill="#50605c"/>
<rect x="13.500" y="55" width="4.500" height="28" rx="2" fill="#22262a"/>
<g fill="#f4f1ee" opacity=".8"><rect x="40" y="74" width="14" height="2"/><rect x="66" y="78" width="20" height="2"/><rect x="100" y="72" width="12" height="2"/><rect x="120" y="80" width="26" height="2.500"/><rect x="30" y="82" width="10" height="2"/></g>
<g fill="#6d8b86" opacity=".8"><rect x="58" y="66" width="4" height="6"/><rect x="76" y="62" width="3" height="6"/><rect x="108" y="76" width="10" height="2"/><rect x="142" y="66" width="8" height="3"/></g>
<g fill="#d4806a" opacity=".75"><rect x="44" y="68" width="16" height="1.600"/><rect x="70" y="72" width="22" height="1.600"/><rect x="36" y="78" width="18" height="1.600"/><rect x="88" y="66" width="14" height="1.600"/><rect x="60" y="84" width="20" height="1.600"/></g>
<ellipse cx="104" cy="81" rx="9" ry="2.600" fill="#bdd248"/>
<ellipse cx="32" cy="86" rx="6" ry="2" fill="#a9bf52"/>
<rect x="34" y="86" width="126" height="4" fill="#727f82" opacity=".8"/>
</svg>
<svg style="left:225.0px;top:282.6px;" width="8.5" height="8" viewBox="0 0 8.5 8"><rect width="8.500" height="8" fill="#3c4852" opacity=".35"/><path d="M1,2.300 h4.500 M3.200,5.700 h4.300" fill="none" stroke="#f4f6f8" stroke-width=".9" stroke-dasharray="1.1 .5"/><path d="M5.300,.7 l2.600,1.600 l-2.600,1.600z M3.400,4.100 l-2.600,1.600 l2.600,1.600z" fill="#f4f6f8"/></svg>
<span class="t" style="left:192.10px;top:305.90px;font-size:6.2px;line-height:10.2px;color:#bcc4cc;">03</span>
<svg style="left:236.8px;top:280.3px;" width="44.6" height="25.3" viewBox="0 0 160 90" preserveAspectRatio="none">
<rect width="160" height="90" fill="#121b26"/>
<rect width="160" height="42" fill="url(#gsky5)"/>
<g filter="url(#b2)">
<ellipse cx="96" cy="20" rx="56" ry="5" fill="#f0604c" transform="rotate(-6 96 20)"/>
<ellipse cx="36" cy="10" rx="34" ry="7" fill="#3d55ae"/>
<ellipse cx="112" cy="6" rx="44" ry="4" fill="#7458a8" transform="rotate(-8 112 6)"/>
<ellipse cx="64" cy="30" rx="46" ry="3.500" fill="#f5a070"/>
<ellipse cx="130" cy="30" rx="30" ry="4" fill="#e85a70"/>
<ellipse cx="20" cy="32" rx="20" ry="4" fill="#6a70c0"/>
</g>
<rect y="38" width="160" height="7" fill="#2f86c4"/>
<rect x="80" y="38" width="80" height="5" fill="#5aa0d0" opacity=".7"/>
<polygon points="0,44 40,43 70,46 110,43 160,47 160,90 0,90" fill="#141d27"/>
<polygon points="70,50 88,48 80,62 66,76 54,90 34,90 50,72 62,60" fill="#3a8ed0"/>
<polygon points="118,60 160,52 160,62 124,70" fill="#2d6aa0"/>
<polygon points="92,50 130,48 128,53 96,55" fill="#c4587a"/>
<polygon points="0,56 30,52 44,58 20,66 0,68" fill="#223446"/>
<polygon points="100,72 140,66 160,70 160,80 110,82" fill="#1e2f40"/>
</svg>
<svg style="left:272.20000000000005px;top:281.3px;" width="8.5" height="8" viewBox="0 0 8.5 8"><rect width="8.500" height="8" fill="#3c4852" opacity=".35"/><path d="M1,2.300 h4.500 M3.200,5.700 h4.300" fill="none" stroke="#f4f6f8" stroke-width=".9" stroke-dasharray="1.1 .5"/><path d="M5.300,.7 l2.600,1.600 l-2.600,1.600z M3.400,4.100 l-2.600,1.600 l2.600,1.600z" fill="#f4f6f8"/></svg>
<span class="t" style="left:238.50px;top:305.90px;font-size:6.2px;line-height:10.2px;color:#bcc4cc;">04</span>
<svg style="left:283.2px;top:280.3px;" width="44.6" height="25.3" viewBox="0 0 160 90" preserveAspectRatio="none">
<rect width="160" height="90" fill="#010308"/>
<path d="M0,83 Q58,84 100,53 Q136,26 160,0 L0,0 Z" fill="#1d56c0"/>
<path d="M0,83 Q58,84 100,53 Q136,26 160,0" fill="none" stroke="#9cc4f4" stroke-width="2.500" filter="url(#b1)"/>
<g filter="url(#b2)" fill="#eef3fb">
<ellipse cx="28" cy="38" rx="30" ry="8" transform="rotate(-28 28 38)"/>
<ellipse cx="84" cy="18" rx="30" ry="6" transform="rotate(-35 84 18)"/>
<ellipse cx="16" cy="70" rx="20" ry="6" transform="rotate(-8 16 70)"/>
<ellipse cx="124" cy="8" rx="22" ry="5" transform="rotate(-45 124 8)"/>
<ellipse cx="60" cy="58" rx="24" ry="5" transform="rotate(-25 60 58)"/>
<ellipse cx="10" cy="12" rx="16" ry="8"/>
</g>
<g filter="url(#b2)" fill="#0c2c78"><ellipse cx="50" cy="6" rx="18" ry="7"/><ellipse cx="66" cy="40" rx="14" ry="5" transform="rotate(-30 66 40)"/><ellipse cx="20" cy="54" rx="10" ry="4"/></g>
</svg>
<svg style="left:318.6px;top:281.3px;" width="8.5" height="8" viewBox="0 0 8.5 8"><rect width="8.500" height="8" fill="#3c4852" opacity=".35"/><path d="M1,2.300 h4.500 M3.200,5.700 h4.300" fill="none" stroke="#f4f6f8" stroke-width=".9" stroke-dasharray="1.1 .5"/><path d="M5.300,.7 l2.600,1.600 l-2.600,1.600z M3.400,4.100 l-2.600,1.600 l2.600,1.600z" fill="#f4f6f8"/></svg>
<span class="t" style="left:284.90px;top:305.90px;font-size:6.2px;line-height:10.2px;color:#bcc4cc;">05</span>
<svg style="left:190.4px;top:316.8px;" width="44.6" height="25.3" viewBox="0 0 160 90" preserveAspectRatio="none">
<rect width="160" height="90" fill="url(#gsky2)"/>
<g filter="url(#b1)" fill="#f4f6f8">
<ellipse cx="24" cy="13" rx="13" ry="2.400"/><ellipse cx="6" cy="7.500" rx="6" ry="2.200"/><ellipse cx="20" cy="8" rx="4" ry="1.600"/>
<ellipse cx="37" cy="24.500" rx="10" ry="3"/><ellipse cx="150" cy="29" rx="9" ry="2.200" opacity=".8"/>
<ellipse cx="112" cy="32.500" rx="12" ry="1.800" opacity=".75"/><ellipse cx="92" cy="24.500" rx="5" ry="1.300" opacity=".7"/>
<ellipse cx="6" cy="21.500" rx="5" ry="1.600" opacity=".85"/>
</g>
<polygon points="0,26 5,23 12,25 24,30 46,42 52,48 0,48" fill="#5b7390"/>
<polygon points="44,38 60,35 76,33 89,31 100,34 124,38 140,34 160,27 160,50 44,50" fill="#6a89a9"/>
<polygon points="120,40 140,34 152,30 160,27 160,50 120,50" fill="#55748f"/>
<polygon points="0,38 4,34 8,38 12,33 17,36 21,31 26,37 31,34 36,40 42,41 48,45 52,48 52,54 0,54" fill="#3b5829"/>
<polygon points="138,42 142,37 146,40 151,36 156,38 160,35 160,50 138,50" fill="#35521f"/>
<rect x="48" y="45" width="94" height="5" fill="#4c6a33"/>
<rect y="48.800" width="160" height="41.200" fill="url(#ggrass)"/>
<rect y="52.500" width="52" height="3" fill="#6d8f3a"/>
<ellipse cx="45" cy="58" rx="9" ry="1.200" fill="#4b6624"/>
<circle cx="76.500" cy="58" r="1.200" fill="#2c3a2a"/>
<rect x="53.700" y="32" width="7.500" height="11" rx="2.200" fill="#8c2b36"/>
<rect x="54.300" y="41.500" width="4.800" height="17.500" fill="#27314d"/>
<circle cx="62.500" cy="30" r="2.400" fill="#9a7a66"/>
<rect x="54" y="58" width="6" height="1.600" fill="#c9ccd0"/>
</svg>
<svg style="left:225.8px;top:317.8px;" width="8.5" height="8" viewBox="0 0 8.5 8"><rect width="8.500" height="8" fill="#3c4852" opacity=".35"/><path d="M1,2.300 h4.500 M3.200,5.700 h4.300" fill="none" stroke="#f4f6f8" stroke-width=".9" stroke-dasharray="1.1 .5"/><path d="M5.300,.7 l2.600,1.600 l-2.600,1.600z M3.400,4.100 l-2.600,1.600 l2.600,1.600z" fill="#f4f6f8"/></svg>
<span class="t" style="left:192.10px;top:342.10px;font-size:6.2px;line-height:10.2px;color:#bcc4cc;">Golf</span>
<svg style="left:236.8px;top:316.8px;" width="44.6" height="25.3" viewBox="0 0 160 90" preserveAspectRatio="none">
<rect width="160" height="90" fill="#8a6a18"/>
<rect width="160" height="50" fill="url(#gsky7)"/>
<rect y="56" width="160" height="34" fill="url(#gwat7)"/>
<g filter="url(#b2)">
<ellipse cx="62" cy="22" rx="34" ry="9" fill="#f6e294"/>
<ellipse cx="60" cy="30" rx="20" ry="6" fill="#fff6c0"/>
<ellipse cx="14" cy="6" rx="30" ry="7" fill="#5c4c26"/>
<ellipse cx="140" cy="8" rx="34" ry="9" fill="#6e5a26"/>
<ellipse cx="64" cy="72" rx="34" ry="7" fill="#f7e480"/>
<ellipse cx="130" cy="70" rx="26" ry="6" fill="#8a8a2a"/>
</g>
<polygon points="0,40 14,33 30,30 48,40 70,42 96,46 124,38 142,34 160,40 160,60 0,60" fill="#33270a"/>
<polygon points="100,44 124,38 142,34 160,40 160,56 100,56" fill="#5c6a1c"/>
<polygon points="0,57 160,55 160,62 100,64 40,61 0,64" fill="#4a380c"/>
<polygon points="0,80 40,84 90,83 160,80 160,90 0,90" fill="#2f2408"/>
</svg>
<svg style="left:272.20000000000005px;top:317.8px;" width="8.5" height="8" viewBox="0 0 8.5 8"><rect width="8.500" height="8" fill="#3c4852" opacity=".35"/><path d="M1,2.300 h4.500 M3.200,5.700 h4.300" fill="none" stroke="#f4f6f8" stroke-width=".9" stroke-dasharray="1.1 .5"/><path d="M5.300,.7 l2.600,1.600 l-2.600,1.600z M3.400,4.100 l-2.600,1.600 l2.600,1.600z" fill="#f4f6f8"/></svg>
<span class="t" style="left:238.50px;top:342.10px;font-size:6.2px;line-height:10.2px;color:#bcc4cc;">10</span>
<svg style="left:283.2px;top:316.8px;" width="44.6" height="25.3" viewBox="0 0 160 90" preserveAspectRatio="none">
<rect width="160" height="90" fill="#3f7d1e"/>
<g filter="url(#b2)">
<ellipse cx="30" cy="30" rx="30" ry="26" fill="#4f9426"/>
<ellipse cx="20" cy="70" rx="24" ry="18" fill="#2f6416"/>
<ellipse cx="140" cy="16" rx="24" ry="18" fill="#5da02e"/>
<ellipse cx="136" cy="78" rx="26" ry="12" fill="#3d7a1c"/>
</g>
<rect width="160" height="90" filter="url(#fol3)" opacity=".7"/>
<rect width="160" height="90" filter="url(#fol4)" opacity=".6"/>
<rect x="60" y="-4" width="7" height="98" fill="#6b4a2a" transform="rotate(7 64 45)"/>
<path d="M152,36 l6,2 l-38,52 l-9,0 z" fill="#9a6a4a"/>
<path d="M80,26 q6,-16 24,-14 q24,2 24,30 q4,30 -8,48 l-40,0 q-6,-20 -4,-40 q0,-14 4,-24z" fill="#f3f3ef"/>
<ellipse cx="84" cy="13" rx="7" ry="7" fill="#161616"/>
<ellipse cx="120" cy="14" rx="6" ry="7" fill="#161616"/>
<path d="M76,30 q-10,8 -10,36 q2,16 14,24 l8,0 q-10,-24 -8,-48 q0,-8 -4,-12z" fill="#161616"/>
<path d="M124,36 q16,10 12,36 q-2,12 -10,18 l-10,0 q10,-22 8,-54z" fill="#161616"/>
<ellipse cx="98" cy="30" rx="4.500" ry="5.500" fill="#161616" transform="rotate(20 98 30)"/>
<ellipse cx="114" cy="34" rx="4" ry="5" fill="#161616" transform="rotate(-10 114 34)"/>
<ellipse cx="104" cy="42" rx="3" ry="2" fill="#222"/>
</svg>
<svg style="left:318.6px;top:317.8px;" width="8.5" height="8" viewBox="0 0 8.5 8"><rect width="8.500" height="8" fill="#3c4852" opacity=".35"/><path d="M1,2.300 h4.500 M3.200,5.700 h4.300" fill="none" stroke="#f4f6f8" stroke-width=".9" stroke-dasharray="1.1 .5"/><path d="M5.300,.7 l2.600,1.600 l-2.600,1.600z M3.400,4.100 l-2.600,1.600 l2.600,1.600z" fill="#f4f6f8"/></svg>
<span class="t" style="left:284.90px;top:342.10px;font-size:6.2px;line-height:10.2px;color:#bcc4cc;">Panda</span>
<svg style="left:190.4px;top:352.9px;" width="44.6" height="25.3" viewBox="0 0 160 90" preserveAspectRatio="none">
<rect width="160" height="90" fill="url(#gsky3)"/>
<g filter="url(#b2)">
<ellipse cx="40" cy="10.500" rx="22" ry="2.600" fill="#474c76"/>
<ellipse cx="14" cy="17" rx="18" ry="3" fill="#4f547c"/>
<ellipse cx="118" cy="8" rx="40" ry="5" fill="#f2a455"/>
<ellipse cx="150" cy="3" rx="16" ry="4" fill="#c27a36"/>
<ellipse cx="72" cy="20" rx="26" ry="4" fill="#c68a90"/>
<ellipse cx="80" cy="5" rx="20" ry="3" fill="#a07f9a"/>
</g>
<rect y="28" width="90" height="62" fill="url(#gsea3)"/>
<polygon points="0,21 9,22.500 16,19.600 40,20.500 60,24 77,28 77,30 0,30" fill="#48495d"/>
<polygon points="16,50 21,46.500 27,48.500 30,52 24,54" fill="#2d3c52"/>
<polygon points="32,50 38,48 40,56 35,58" fill="#36455c"/>
<polygon points="76,29 90,26.500 102,26 86,44 66,66 40,90 17,90 38,75 31,63 37,48 56,36" fill="#4d4234"/>
<polygon points="60,40 72,33 86,30 80,44 60,58 52,70" fill="#5d5440" opacity=".8"/>
<polygon points="99,27 110,21 122,21 134,18 146,16 160,13 160,90 26,90 42,72 57,61 61,44 84,32" fill="#d9dee9"/>
<polygon points="146,15 160,12 160,30 150,32 144,24" fill="#8a6f60"/>
<polygon points="128.700,51.500 160,50 160,69 128.700,68" fill="#dcc4b8"/>
<polygon points="112,20.800 132.600,20.800 132.600,37 112,37" fill="#f0f2f7"/>
<path d="M87.500,45.700 a15.200,14.600 0 0 1 30.400,0 z" fill="#2a5fca"/>
<path d="M113.800,20.800 a9.400,6.800 0 0 1 18.800,0 z" fill="#2a5fca"/>
<path d="M62,44.700 a6.500,9 0 0 1 13,0 z" fill="#3366cc"/>
<rect x="61" y="44.700" width="70" height="17" fill="#eceff5"/>
<polygon points="61,61 131,61 140,90 40,90" fill="#d3d9e6"/>
<g fill="#8d99b3" opacity=".75"><rect x="66" y="49" width="2.500" height="6"/><rect x="72" y="49" width="2.500" height="6"/><rect x="96" y="51" width="3" height="7"/><rect x="108" y="51" width="3" height="7"/><rect x="60" y="62" width="30" height="2"/><rect x="80" y="70" width="40" height="2"/><rect x="100" y="78" width="30" height="2"/><rect x="136" y="36" width="10" height="3"/><rect x="140" y="44" width="16" height="2"/></g>
<g fill="#2f5fc0"><rect x="116" y="26" width="2.400" height="4"/><rect x="122" y="25" width="2.400" height="4.500"/><rect x="128" y="26" width="2.400" height="4"/><rect x="120" y="34" width="3" height="4.500"/><rect x="54" y="74" width="4" height="6"/><rect x="96" y="78" width="6" height="4"/><rect x="114" y="73" width="7" height="4"/><rect x="100" y="70" width="4" height="4"/></g>
<g fill="#a8836c"><rect x="134" y="24" width="6" height="4"/><rect x="148" y="38" width="8" height="4"/><rect x="128" y="82" width="10" height="4"/><rect x="36" y="84" width="8" height="4"/></g>
<rect x="80" y="82" width="9" height="8" fill="#7c2b3c"/>
<ellipse cx="146" cy="72" rx="15" ry="8.500" fill="#f1f3f8"/>
<rect x="131" y="72" width="29" height="9" fill="#eceff5"/>
</svg>
<svg style="left:225.8px;top:353.9px;" width="8.5" height="8" viewBox="0 0 8.5 8"><rect width="8.500" height="8" fill="#3c4852" opacity=".35"/><path d="M1,2.300 h4.500 M3.200,5.700 h4.300" fill="none" stroke="#f4f6f8" stroke-width=".9" stroke-dasharray="1.1 .5"/><path d="M5.300,.7 l2.600,1.600 l-2.600,1.600z M3.400,4.100 l-2.600,1.600 l2.600,1.600z" fill="#f4f6f8"/></svg>
<span class="t" style="left:192.10px;top:378.30px;font-size:6.2px;line-height:10.2px;color:#bcc4cc;">19</span>
<div style="left:190.4px;top:388.6px;width:44.600px;height:9.700px;overflow:hidden;background:none;"><svg style="left:0px;top:0px;" width="44.6" height="24.8" viewBox="0 0 160 90" preserveAspectRatio="none">
<rect width="160" height="90" fill="#edf2e6"/>
<g filter="url(#b3)">
<ellipse cx="44" cy="20" rx="46" ry="18" fill="#86a64e"/>
<ellipse cx="58" cy="42" rx="30" ry="15" fill="#9bb864"/>
<ellipse cx="128" cy="9" rx="36" ry="11" fill="#93b25a"/>
<ellipse cx="146" cy="40" rx="12" ry="22" fill="#b4cb86"/>
<ellipse cx="22" cy="50" rx="16" ry="9" fill="#7f9f48"/>
<ellipse cx="14" cy="78" rx="26" ry="13" fill="#f5f8f1"/>
<ellipse cx="5" cy="18" rx="6" ry="9" fill="#f1f5ea"/>
<ellipse cx="82" cy="6" rx="14" ry="5" fill="#6f9240"/>
<ellipse cx="40" cy="66" rx="14" ry="6" fill="#c5d6a4"/>
</g>
<rect width="160" height="90" filter="url(#fol)" opacity=".55"/>
<rect width="160" height="90" filter="url(#fol2)" opacity=".75"/>
<path d="M147,0 q4,30 2,50 q-2,20 0,40 l3,0 q-2,-22 0,-42 q2,-24 -2,-48z" fill="#8a5a3c"/>
<path d="M92,24 q0,-20 18,-21 q19,0 21,22 q1,14 -5,26 q-4,8 -9,11 l-6,-32 z" fill="#2a2221"/>
<ellipse cx="109.500" cy="36" rx="12.500" ry="17" fill="#e9b595"/>
<path d="M95,30 q5,-16 25,-10 q-10,3 -25,10z" fill="#2a2221"/>
<path d="M101,45.500 q8,5 14,-.5 q-7,2.500 -14,.5z" fill="#fff"/>
<ellipse cx="103.500" cy="33" rx="1.600" ry="1" fill="#3a2a26"/><ellipse cx="114.500" cy="32.500" rx="1.600" ry="1" fill="#3a2a26"/>
<path d="M98,57 l24,-1 l14,12 l6,22 l-56,0 l4,-18 z" fill="#a9b2c4"/>
<path d="M102,53 l15,0 l-1,15 l-13,0 z" fill="#e6b393"/>
<path d="M124,60 l6,3 l-8,27 l-6,0 z" fill="#a4653a"/>
<path d="M40,84 q10,-22 26,-40 q4,-6 10,-2 l4,6 q-14,18 -16,34 q-6,10 -24,6 z" fill="#e8b495"/>
<path d="M128,74 q10,0 10,10 l-2,6 l-14,0 z" fill="#e6b191"/>
<g fill="#8fb136"><ellipse cx="78" cy="66" rx="9.500" ry="22"/><ellipse cx="75" cy="50" rx="7" ry="6"/></g>
<g fill="#b7d25c"><circle cx="75" cy="56" r="3"/><circle cx="81" cy="64" r="3"/><circle cx="76" cy="72" r="3"/><circle cx="82" cy="78" r="3"/><circle cx="74" cy="82" r="2.500"/><circle cx="83" cy="54" r="2.500"/><circle cx="73" cy="64" r="2.500"/><circle cx="80" cy="86" r="2.500"/></g>
<g fill="#6f9126"><circle cx="78" cy="60" r="1.600"/><circle cx="79" cy="69" r="1.600"/><circle cx="77" cy="77" r="1.600"/><circle cx="84" cy="72" r="1.600"/></g>
</svg></div>
<span class="t" style="left:228.00px;top:326.05px;font-size:5.5px;line-height:9.5px;color:#d0433f;opacity:.8;">Qt</span>
<span class="t" style="left:321.50px;top:325.15px;font-size:5.5px;line-height:9.5px;color:#d0433f;opacity:.7;">Qt</span>
<div style="left:189.7px;top:398.5px;width:137.6px;height:4.2px;background:#2f3c48;border-radius:2.100px;"></div>
<div style="left:757px;top:281.3px;width:3.9px;height:95px;background:#2f3d4a;border-radius:2px;"></div>
<div style="left:134px;top:404px;width:628px;height:1.7px;background:#131e29;"></div>
<div style="left:134px;top:405.6px;width:628px;height:67.4px;background:#1e2a36;"></div>
<div style="left:134px;top:405.6px;width:628px;height:14px;background:#23323f;"></div>
<div style="left:166px;top:418.2px;width:7px;height:1.4px;background:#19b3a4;"></div>
<svg style="left:691.5px;top:407.1px;" width="10" height="11" viewBox="0 0 10 11"><circle cx="5" cy="6" r="2.900" fill="none" stroke="#c4ccd4" stroke-width=".9"/><path d="M5,4.600 v1.500 M4.200,2.100 h1.600 M5,2.100 v.9" fill="none" stroke="#c4ccd4" stroke-width=".85" stroke-linecap="round"/></svg>
<svg style="left:705.3px;top:407.1px;" width="10" height="11" viewBox="0 0 10 11"><circle cx="5" cy="6" r="2.900" fill="none" stroke="#e8a628" stroke-width=".9"/><path d="M5,4.600 v1.500 M4.200,2.100 h1.600 M5,2.100 v.9" fill="none" stroke="#e8a628" stroke-width=".85" stroke-linecap="round"/></svg>
<svg style="left:719px;top:407.6px;" width="10" height="10" viewBox="0 0 10 10"><path d="M2,3.600 h5.200 l-1.300,-1.300 M8,6.400 h-5.200 l1.300,1.300" fill="none" stroke="#c4ccd4" stroke-width=".85" stroke-linecap="round" stroke-linejoin="round"/></svg>
<svg style="left:733.4px;top:408.2px;" width="9.2" height="9.2" viewBox="0 0 10 10"><path d="M5.6,1.4 l3,3 l-1,.4 l-1.4,1.4 l-.2,1.8 l-3.8,-3.8 l1.8,-.2 l1.4,-1.4z M3.9,6.1 l-2.5,2.6" fill="none" stroke="#d5dbe1" stroke-width=".9" stroke-linejoin="round" stroke-linecap="round"/></svg>
<svg style="left:747px;top:407.8px;" width="10" height="10" viewBox="0 0 10 10"><path d="M2.2,2.2 L7.8,7.8 M7.8,2.2 L2.2,7.8" fill="none" stroke="#d5dbe1" stroke-width="1" stroke-linecap="round"/></svg>
<div style="left:134px;top:419.6px;width:60.5px;height:53px;background:#202e3a;"></div>
<div style="left:194.5px;top:419.6px;width:1px;height:53px;background:#141e28;"></div>
<div style="left:195.5px;top:420px;width:566.5px;height:13px;background:#11202c;"></div>
<svg style="left:198.5px;top:422px;" width="8" height="8" viewBox="0 0 8 8"><path d="M2,3 l2,2 l2,-2" fill="none" stroke="#c4ccd4" stroke-width=".9" stroke-linecap="round" stroke-linejoin="round"/></svg>
<svg style="left:208.5px;top:421.8px;" width="10" height="9" viewBox="0 0 10 9"><rect x="1.200" y="1.200" width="7" height="5" rx=".6" fill="none" stroke="#c4ccd4" stroke-width=".85"/><path d="M3,8 h3.400" stroke="#c4ccd4" stroke-width=".85"/><rect x="5.600" y="3.800" width="3.200" height="4.200" fill="#c4ccd4"/></svg>
<span class="t" style="left:220.50px;top:420.90px;font-size:7.4px;line-height:11.4px;color:#d2d9e0;letter-spacing:-0.356px;">10.40.91.12 (202110290006-P)</span>
<div style="left:139px;top:431px;width:52px;height:12.5px;background:#24323f;border-radius:2px;"></div>
<span class="t" style="left:165.50px;top:431.80px;font-size:7.4px;line-height:11.4px;color:#6a7784;letter-spacing:-0.455px;">Pre-Edit</span>
<div style="left:139px;top:449.8px;width:52px;height:11px;background:#2f4459;border-radius:2px;"></div>
<div style="left:175.8px;top:453.6px;width:4px;height:4px;background:#e6ebf0;"></div>
<div style="left:765px;top:36px;width:257px;height:306px;background:#1f2c38;"></div>
<div style="left:765px;top:36px;width:257px;height:14px;background:#23323f;"></div>
<span class="t" style="left:770.00px;top:37.20px;font-size:7.6px;line-height:11.6px;color:#d2d9e0;letter-spacing:-0.186px;">Library</span>
<span class="t" style="left:803.50px;top:37.20px;font-size:7.6px;line-height:11.6px;color:#d2d9e0;letter-spacing:-0.340px;">Effects Library</span>
<span class="t" style="left:857.50px;top:37.20px;font-size:7.6px;line-height:11.6px;color:#eef1f4;letter-spacing:-0.225px;">Properties</span>
<span class="t" style="left:900.50px;top:37.20px;font-size:7.6px;line-height:11.6px;color:#d2d9e0;letter-spacing:-0.311px;">Input Sources</span>
<span class="t" style="left:954.00px;top:37.20px;font-size:7.6px;line-height:11.6px;color:#d2d9e0;">O</span>
<div style="left:852px;top:48.7px;width:43px;height:1.5px;background:#19b3a4;"></div>
<span class="t" style="left:965.50px;top:34.70px;font-size:11px;line-height:15px;color:#56626e;">«</span>
<span class="t" style="left:978.60px;top:34.70px;font-size:11px;line-height:15px;color:#d5dbe1;">»</span>
<svg style="left:993.4px;top:38.199999999999996px;" width="9.2" height="9.2" viewBox="0 0 10 10"><path d="M5.6,1.4 l3,3 l-1,.4 l-1.4,1.4 l-.2,1.8 l-3.8,-3.8 l1.8,-.2 l1.4,-1.4z M3.9,6.1 l-2.5,2.6" fill="none" stroke="#d5dbe1" stroke-width=".9" stroke-linejoin="round" stroke-linecap="round"/></svg>
<svg style="left:1007px;top:37.8px;" width="10" height="10" viewBox="0 0 10 10"><path d="M2.2,2.2 L7.8,7.8 M7.8,2.2 L2.2,7.8" fill="none" stroke="#d5dbe1" stroke-width="1" stroke-linecap="round"/></svg>
<div style="left:765px;top:50.2px;width:257px;height:14px;background:#222f3c;"></div>
<div style="left:765px;top:64px;width:257px;height:1px;background:#16212c;"></div>
<span class="t" style="left:866.50px;top:51.40px;font-size:7.6px;line-height:11.6px;color:#1fb8a6;letter-spacing:-0.290px;">Media Properties</span>
<div style="left:1017.3px;top:64.5px;width:4px;height:124px;background:#323f4b;border-radius:1.500px;"></div>
<svg style="left:768.1px;top:70px;" width="6" height="6" viewBox="0 0 6 6"><path d="M1.400,2.200 l1.500,1.500 l1.500,-1.500" fill="none" stroke="#aeb7c0" stroke-width=".85" stroke-linecap="round" stroke-linejoin="round"/></svg>
<span class="t" style="left:776.00px;top:67.20px;font-size:7.6px;line-height:11.6px;color:#d2d9e0;letter-spacing:-0.629px;">Basic</span>
<span class="t" style="left:786.50px;top:81.50px;font-size:7.6px;line-height:11.6px;color:#d2d9e0;letter-spacing:-0.459px;">Name</span>
<div style="left:811px;top:81.3px;width:200px;height:11.3px;background:#11212d;"></div>
<span class="t" style="left:813.00px;top:81.60px;font-size:7.4px;line-height:11.4px;color:#d2d9e0;">03</span>
<span class="t" style="left:777.00px;top:96.60px;font-size:7.6px;line-height:11.6px;color:#d2d9e0;letter-spacing:-0.102px;">Duration</span>
<div style="left:811px;top:96.3px;width:64px;height:11.4px;background:#11212d;"></div>
<span class="t" style="left:813.00px;top:96.70px;font-size:7.4px;line-height:11.4px;color:#d2d9e0;letter-spacing:-0.422px;">00:00:05:000</span>
<span class="t" style="left:778.00px;top:111.70px;font-size:7.6px;line-height:11.6px;color:#d2d9e0;letter-spacing:-0.492px;">Playback</span>
<svg style="left:812.4px;top:114.5px;" width="6" height="6" viewBox="0 0 6 6"><path d="M4.200,1 l-2.600,2 l2.600,2z" fill="#e6ebf0"/></svg>
<div style="left:822px;top:111.4px;width:42px;height:11.4px;background:#11212d;"></div>
<span class="t" style="left:824.00px;top:111.80px;font-size:7.4px;line-height:11.4px;color:#d2d9e0;letter-spacing:-0.422px;">00:00:05:000</span>
<svg style="left:867.8px;top:114.5px;" width="6" height="6" viewBox="0 0 6 6"><path d="M1.800,1 l2.600,2 l-2.600,2z" fill="#e6ebf0"/></svg>
<svg style="left:881.5px;top:113.0px;" width="9" height="9" viewBox="0 0 9 9"><path d="M2.790,2.890 A2.700,2.700 0 1 1 2.040,5.270" fill="none" stroke="#c4ccd4" stroke-width=".9" stroke-linecap="round"/><path d="M1.300,1.700 L3.800,1.700 L3.300,4.100Z" fill="#c4ccd4"/></svg>
<span class="t" style="left:773.00px;top:126.80px;font-size:7.6px;line-height:11.6px;color:#d2d9e0;letter-spacing:-0.274px;">Start Time</span>
<svg style="left:812.4px;top:129.6px;" width="6" height="6" viewBox="0 0 6 6"><path d="M4.200,1 l-2.600,2 l2.600,2z" fill="#e6ebf0"/></svg>
<div style="left:822px;top:126.5px;width:42px;height:11.4px;background:#11212d;"></div>
<span class="t" style="left:824.00px;top:126.90px;font-size:7.4px;line-height:11.4px;color:#d2d9e0;letter-spacing:-0.422px;">00:00:00:000</span>
<svg style="left:867.8px;top:129.6px;" width="6" height="6" viewBox="0 0 6 6"><path d="M1.800,1 l2.600,2 l-2.600,2z" fill="#e6ebf0"/></svg>
<svg style="left:881.5px;top:128.1px;" width="9" height="9" viewBox="0 0 9 9"><path d="M2.790,2.890 A2.700,2.700 0 1 1 2.040,5.270" fill="none" stroke="#c4ccd4" stroke-width=".9" stroke-linecap="round"/><path d="M1.300,1.700 L3.800,1.700 L3.300,4.100Z" fill="#c4ccd4"/></svg>
<span class="t" style="left:776.50px;top:141.80px;font-size:7.6px;line-height:11.6px;color:#d2d9e0;letter-spacing:-0.463px;">End Time</span>
<svg style="left:812.4px;top:144.6px;" width="6" height="6" viewBox="0 0 6 6"><path d="M4.200,1 l-2.600,2 l2.600,2z" fill="#e6ebf0"/></svg>
<div style="left:822px;top:141.5px;width:42px;height:11.4px;background:#11212d;"></div>
<span class="t" style="left:824.00px;top:141.90px;font-size:7.4px;line-height:11.4px;color:#d2d9e0;letter-spacing:-0.422px;">00:00:05:000</span>
<svg style="left:867.8px;top:144.6px;" width="6" height="6" viewBox="0 0 6 6"><path d="M1.800,1 l2.600,2 l-2.600,2z" fill="#e6ebf0"/></svg>
<svg style="left:881.5px;top:143.1px;" width="9" height="9" viewBox="0 0 9 9"><path d="M2.790,2.890 A2.700,2.700 0 1 1 2.040,5.270" fill="none" stroke="#c4ccd4" stroke-width=".9" stroke-linecap="round"/><path d="M1.300,1.700 L3.800,1.700 L3.300,4.100Z" fill="#c4ccd4"/></svg>
<span class="t" style="left:770.80px;top:156.90px;font-size:7.6px;line-height:11.6px;color:#d2d9e0;letter-spacing:-0.320px;">Delay Start</span>
<svg style="left:812.4px;top:159.7px;" width="6" height="6" viewBox="0 0 6 6"><path d="M4.200,1 l-2.600,2 l2.600,2z" fill="#e6ebf0"/></svg>
<div style="left:822px;top:156.6px;width:42px;height:11.4px;background:#11212d;"></div>
<span class="t" style="left:824.00px;top:157.00px;font-size:7.4px;line-height:11.4px;color:#d2d9e0;letter-spacing:-0.422px;">00:00:00:000</span>
<svg style="left:867.8px;top:159.7px;" width="6" height="6" viewBox="0 0 6 6"><path d="M1.800,1 l2.600,2 l-2.600,2z" fill="#e6ebf0"/></svg>
<svg style="left:881.5px;top:158.2px;" width="9" height="9" viewBox="0 0 9 9"><path d="M2.790,2.890 A2.700,2.700 0 1 1 2.040,5.270" fill="none" stroke="#c4ccd4" stroke-width=".9" stroke-linecap="round"/><path d="M1.300,1.700 L3.800,1.700 L3.300,4.100Z" fill="#c4ccd4"/></svg>
<div style="left:765px;top:171px;width:253px;height:1px;background:#141f29;"></div>
<svg style="left:768.1px;top:178px;" width="6" height="6" viewBox="0 0 6 6"><path d="M1.400,2.200 l1.500,1.500 l1.500,-1.500" fill="none" stroke="#aeb7c0" stroke-width=".85" stroke-linecap="round" stroke-linejoin="round"/></svg>
<span class="t" style="left:776.00px;top:175.20px;font-size:7.6px;line-height:11.6px;color:#d2d9e0;letter-spacing:-0.492px;">Playback</span>
<span class="t" style="left:770.50px;top:189.50px;font-size:7.6px;line-height:11.6px;color:#d2d9e0;letter-spacing:-0.196px;">End Action</span>
<svg style="left:811.75px;top:192.05px;" width="6.5" height="6.5" viewBox="0 0 6.5 6.5"><rect x=".6" y=".6" width="5.300" height="5.300" rx="1" fill="none" stroke="#19b3a4" stroke-width=".9"/><path d="M1.800,3.300 l1.100,1.100 l1.900,-2.100" fill="none" stroke="#19b3a4" stroke-width=".85" stroke-linecap="round" stroke-linejoin="round"/></svg>
<span class="t" style="left:820.60px;top:189.50px;font-size:7.6px;line-height:11.6px;color:#d2d9e0;letter-spacing:-0.365px;">Loop</span>
<svg style="left:842.35px;top:192.05px;" width="6.5" height="6.5" viewBox="0 0 6.5 6.5"><rect x=".6" y=".6" width="5.300" height="5.300" rx="1" fill="none" stroke="#aeb7c0" stroke-width=".9"/></svg>
<span class="t" style="left:851.20px;top:189.50px;font-size:7.6px;line-height:11.6px;color:#d2d9e0;letter-spacing:-0.556px;">Last Frame</span>
<svg style="left:889.95px;top:192.05px;" width="6.5" height="6.5" viewBox="0 0 6.5 6.5"><rect x=".6" y=".6" width="5.300" height="5.300" rx="1" fill="none" stroke="#aeb7c0" stroke-width=".9"/></svg>
<span class="t" style="left:899.00px;top:189.50px;font-size:7.6px;line-height:11.6px;color:#d2d9e0;letter-spacing:-0.296px;">Stop</span>
<svg style="left:919.35px;top:192.05px;" width="6.5" height="6.5" viewBox="0 0 6.5 6.5"><rect x=".6" y=".6" width="5.300" height="5.300" rx="1" fill="none" stroke="#aeb7c0" stroke-width=".9"/></svg>
<span class="t" style="left:928.40px;top:189.50px;font-size:7.6px;line-height:11.6px;color:#d2d9e0;letter-spacing:-0.293px;">Loop Count</span>
<div style="left:970px;top:189.8px;width:23.5px;height:11px;background:#273441;border-radius:1.500px;"></div>
<span class="t" style="left:972.50px;top:189.70px;font-size:7.2px;line-height:11.2px;color:#5b6875;letter-spacing:-0.798px;">1Nc</span>
<svg style="left:985.5px;top:190.3px;" width="7" height="10" viewBox="0 0 7 10"><path d="M1.600,3.600 l1.900,-1.800 l1.900,1.800 M1.600,6.400 l1.900,1.800 l1.900,-1.800" fill="none" stroke="#5b6875" stroke-width=".8" stroke-linecap="round" stroke-linejoin="round"/></svg>
<span class="t" style="left:788.00px;top:204.60px;font-size:7.6px;line-height:11.6px;color:#d2d9e0;letter-spacing:-0.411px;">Jump</span>
<svg style="left:811.75px;top:207.15px;" width="6.5" height="6.5" viewBox="0 0 6.5 6.5"><rect x=".6" y=".6" width="5.300" height="5.300" rx="1" fill="none" stroke="#19b3a4" stroke-width=".9"/><path d="M1.800,3.300 l1.100,1.100 l1.900,-2.100" fill="none" stroke="#19b3a4" stroke-width=".85" stroke-linecap="round" stroke-linejoin="round"/></svg>
<span class="t" style="left:820.60px;top:204.60px;font-size:7.6px;line-height:11.6px;color:#d2d9e0;letter-spacing:-0.287px;">No Jump</span>
<svg style="left:853.95px;top:207.15px;" width="6.5" height="6.5" viewBox="0 0 6.5 6.5"><rect x=".6" y=".6" width="5.300" height="5.300" rx="1" fill="none" stroke="#aeb7c0" stroke-width=".9"/></svg>
<span class="t" style="left:863.00px;top:204.60px;font-size:7.6px;line-height:11.6px;color:#d2d9e0;letter-spacing:-0.276px;">Program Loop</span>
<svg style="left:912.45px;top:207.15px;" width="6.5" height="6.5" viewBox="0 0 6.5 6.5"><rect x=".6" y=".6" width="5.300" height="5.300" rx="1" fill="none" stroke="#aeb7c0" stroke-width=".9"/></svg>
<span class="t" style="left:921.60px;top:204.60px;font-size:7.6px;line-height:11.6px;color:#d2d9e0;letter-spacing:-0.294px;">Next</span>
<span class="t" style="left:773.50px;top:219.60px;font-size:7.6px;line-height:11.6px;color:#d2d9e0;letter-spacing:-0.169px;">Transition</span>
<div style="left:811px;top:219.6px;width:35.5px;height:11.3px;background:#11212d;"></div>
<span class="t" style="left:813.00px;top:219.70px;font-size:7.4px;line-height:11.4px;color:#d2d9e0;letter-spacing:-0.326px;">Cut</span>
<svg style="left:838.5px;top:222.6px;" width="6" height="6" viewBox="0 0 6 6"><path d="M1.400,2.200 l1.500,1.500 l1.500,-1.500" fill="none" stroke="#aeb7c0" stroke-width=".85" stroke-linecap="round" stroke-linejoin="round"/></svg>
<span class="t" style="left:766.50px;top:234.50px;font-size:7.6px;line-height:11.6px;color:#d2d9e0;letter-spacing:-0.219px;">Media Keep</span>
<div style="left:811.2px;top:238px;width:11.5px;height:4.8px;background:#2f3c48;border-radius:2.400px;"></div>
<div style="left:811.2px;top:237.6px;width:5.6px;height:5.6px;background:#f0f3f6;border-radius:50%;"></div>
<div style="left:765px;top:249.6px;width:253px;height:1px;background:#141f29;"></div>
<svg style="left:768.1px;top:255.8px;" width="6" height="6" viewBox="0 0 6 6"><path d="M1.400,2.200 l1.500,1.500 l1.500,-1.500" fill="none" stroke="#aeb7c0" stroke-width=".85" stroke-linecap="round" stroke-linejoin="round"/></svg>
<span class="t" style="left:776.00px;top:253.00px;font-size:7.6px;line-height:11.6px;color:#d2d9e0;letter-spacing:-0.399px;">GPU Mapping</span>
<span class="t" style="left:783.50px;top:267.20px;font-size:7.6px;line-height:11.6px;color:#d2d9e0;letter-spacing:-0.301px;">Device</span>
<div style="left:811px;top:267px;width:92px;height:11.6px;background:#11212d;"></div>
<span class="t" style="left:813.00px;top:267.30px;font-size:7.4px;line-height:11.4px;color:#d2d9e0;letter-spacing:-0.226px;">Local</span>
<svg style="left:895.5px;top:270.2px;" width="6" height="6" viewBox="0 0 6 6"><path d="M1.400,2.200 l1.500,1.500 l1.500,-1.500" fill="none" stroke="#aeb7c0" stroke-width=".85" stroke-linecap="round" stroke-linejoin="round"/></svg>
<span class="t" style="left:785.00px;top:282.20px;font-size:7.6px;line-height:11.6px;color:#d2d9e0;letter-spacing:-0.340px;">In Use</span>
<span class="t" style="left:811.00px;top:282.20px;font-size:7.6px;line-height:11.6px;color:#d2d9e0;letter-spacing:-0.307px;">None</span>
<span class="t" style="left:791.00px;top:297.20px;font-size:7.6px;line-height:11.6px;color:#d2d9e0;letter-spacing:-0.841px;">GPU</span>
<svg style="left:811.75px;top:299.75px;" width="6.5" height="6.5" viewBox="0 0 6.5 6.5"><rect x=".6" y=".6" width="5.300" height="5.300" rx="1" fill="none" stroke="#19b3a4" stroke-width=".9"/><path d="M1.800,3.300 l1.100,1.100 l1.900,-2.100" fill="none" stroke="#19b3a4" stroke-width=".85" stroke-linecap="round" stroke-linejoin="round"/></svg>
<span class="t" style="left:820.60px;top:297.20px;font-size:7.6px;line-height:11.6px;color:#d2d9e0;letter-spacing:-0.272px;">Auto Select</span>
<div style="left:862px;top:297.4px;width:121.5px;height:11.2px;background:#222f3b;"></div>
<span class="t" style="left:864.50px;top:297.30px;font-size:7.4px;line-height:11.4px;color:#566370;letter-spacing:-0.236px;">Follow system settings</span>
<svg style="left:975.5px;top:300.2px;" width="6" height="6" viewBox="0 0 6 6"><path d="M1.400,2.200 l1.500,1.500 l1.500,-1.500" fill="none" stroke="#aeb7c0" stroke-width=".85" stroke-linecap="round" stroke-linejoin="round"/></svg>
<div style="left:986.2px;top:298px;width:26px;height:10px;background:#19b09c;border-radius:1.500px;"></div>
<span class="t" style="left:990.45px;top:297.30px;font-size:7.4px;line-height:11.4px;color:#eafaf6;letter-spacing:-0.190px;">Apply</span>
<div style="left:765px;top:313px;width:253px;height:1px;background:#141f29;"></div>
<svg style="left:768.1px;top:318.7px;" width="6" height="6" viewBox="0 0 6 6"><path d="M1.400,2.200 l1.500,1.500 l1.500,-1.500" fill="none" stroke="#aeb7c0" stroke-width=".85" stroke-linecap="round" stroke-linejoin="round"/></svg>
<span class="t" style="left:776.00px;top:315.90px;font-size:7.6px;line-height:11.6px;color:#d2d9e0;letter-spacing:-0.738px;">Image</span>
<span class="t" style="left:794.50px;top:330.20px;font-size:7.6px;line-height:11.6px;color:#d2d9e0;letter-spacing:-0.446px;">Flip</span>
<svg style="left:811.75px;top:332.75px;" width="6.5" height="6.5" viewBox="0 0 6.5 6.5"><rect x=".6" y=".6" width="5.300" height="5.300" rx="1" fill="none" stroke="#aeb7c0" stroke-width=".9"/></svg>
<span class="t" style="left:820.60px;top:330.20px;font-size:7.6px;line-height:11.6px;color:#d2d9e0;">H</span>
<svg style="left:830.95px;top:332.75px;" width="6.5" height="6.5" viewBox="0 0 6.5 6.5"><rect x=".6" y=".6" width="5.300" height="5.300" rx="1" fill="none" stroke="#aeb7c0" stroke-width=".9"/></svg>
<span class="t" style="left:840.00px;top:330.20px;font-size:7.6px;line-height:11.6px;color:#d2d9e0;">V</span>
<div style="left:765px;top:341px;width:257px;height:1.2px;background:#131e29;"></div>
<div style="left:765px;top:342px;width:257px;height:14px;background:#23323f;"></div>
<span class="t" style="left:770.00px;top:343.20px;font-size:7.6px;line-height:11.6px;color:#eef1f4;letter-spacing:-0.259px;">Preview Output</span>
<span class="t" style="left:829.50px;top:343.20px;font-size:7.6px;line-height:11.6px;color:#d2d9e0;letter-spacing:-0.337px;">Timecode</span>
<div style="left:765px;top:354.6px;width:59px;height:1.5px;background:#19b3a4;"></div>
<svg style="left:993.4px;top:344.4px;" width="9.2" height="9.2" viewBox="0 0 10 10"><path d="M5.6,1.4 l3,3 l-1,.4 l-1.4,1.4 l-.2,1.8 l-3.8,-3.8 l1.8,-.2 l1.4,-1.4z M3.9,6.1 l-2.5,2.6" fill="none" stroke="#d5dbe1" stroke-width=".9" stroke-linejoin="round" stroke-linecap="round"/></svg>
<svg style="left:1007px;top:344px;" width="10" height="10" viewBox="0 0 10 10"><path d="M2.2,2.2 L7.8,7.8 M7.8,2.2 L2.2,7.8" fill="none" stroke="#d5dbe1" stroke-width="1" stroke-linecap="round"/></svg>
<div style="left:765px;top:356px;width:257px;height:96.5px;background:#000;"></div>
<span class="t" style="left:769.00px;top:356.00px;font-size:7.2px;line-height:11.2px;color:#d2d9e0;letter-spacing:-0.583px;">P 1</span>
<svg style="left:813.3px;top:359.3px;" width="79.6" height="44.9" viewBox="0 0 160 90" preserveAspectRatio="none">
<rect width="160" height="90" fill="#d6e6ea"/>
<rect width="160" height="34" fill="url(#gs1)"/>
<rect y="30" width="160" height="30" fill="url(#gm1)"/>
<rect y="58" width="160" height="32" fill="#e0c3b6"/>
<g filter="url(#b2)">
<ellipse cx="126" cy="53" rx="32" ry="11" fill="#bba3a4"/>
<ellipse cx="146" cy="42" rx="12" ry="10" fill="#c9b3b0"/>
<ellipse cx="96" cy="61" rx="20" ry="6" fill="#c7aca8"/>
<ellipse cx="50" cy="70" rx="34" ry="6" fill="#ecd9d0"/>
<ellipse cx="128" cy="9" rx="9" ry="3" fill="#e6cdb8"/>
<ellipse cx="63" cy="5" rx="8" ry="1.400" fill="#dceef1" transform="rotate(-50 63 5)"/>
<ellipse cx="130" cy="76" rx="34" ry="9" fill="#d8dedb"/>
<ellipse cx="60" cy="82" rx="30" ry="5" fill="#c99a8a"/>
</g>
<polygon points="147,0 153,0 148.600,30 140.500,30" fill="#818d92"/>
<polygon points="0,3 51,8.700 95,19 140,23.700 160,24 160,28.500 150,30 143,36 139,39.500 136,37.500 120,34.500 95,31.500 60,30.500 0,29.500" fill="#6f7b80"/>
<polygon points="0,4.500 50,10 94,20.500 130,24.500 122,27 60,20 0,15" fill="#8d9a9e"/>
<polygon points="0,21 60,24.500 96,27 122,30.500 138,36 139,39.500 136,37.500 120,34.500 95,31.500 60,30.500 0,29.500" fill="#454f53"/>
<polygon points="6,4.500 36,7.500 38,11 8,8.500" fill="#7fb39a"/>
<polygon points="62,12 68,13.500 73,24 67,22.500" fill="#68a58a" opacity=".85"/>
<polygon points="52,9 55,9.500 66,29 62,28.500" fill="#4d585c"/>
<rect x="115" y="15.500" width="7" height="6" fill="#4a5559"/>
<rect x="153" y="30" width="7" height="60" fill="#c5d3cf"/>
<rect x="146" y="36" width="2" height="12" fill="#8a9698"/>
<rect x="121" y="45" width="4" height="16" fill="#94a7a6"/>
<polygon points="118,50 128,50 126,54 120,54" fill="#7d908f"/>
<rect x="78" y="40.500" width="32" height="1.500" fill="#7d8c90"/>
<rect x="106" y="36" width="1.200" height="6" fill="#8a999c"/>
<polygon points="0,36 6,37 3,42 0,42" fill="#5fb0b0"/>
<polygon points="0,55 8,58 20,78 30,90 0,90" fill="#50605c"/>
<rect x="13.500" y="55" width="4.500" height="28" rx="2" fill="#22262a"/>
<g fill="#f4f1ee" opacity=".8"><rect x="40" y="74" width="14" height="2"/><rect x="66" y="78" width="20" height="2"/><rect x="100" y="72" width="12" height="2"/><rect x="120" y="80" width="26" height="2.500"/><rect x="30" y="82" width="10" height="2"/></g>
<g fill="#6d8b86" opacity=".8"><rect x="58" y="66" width="4" height="6"/><rect x="76" y="62" width="3" height="6"/><rect x="108" y="76" width="10" height="2"/><rect x="142" y="66" width="8" height="3"/></g>
<g fill="#d4806a" opacity=".75"><rect x="44" y="68" width="16" height="1.600"/><rect x="70" y="72" width="22" height="1.600"/><rect x="36" y="78" width="18" height="1.600"/><rect x="88" y="66" width="14" height="1.600"/><rect x="60" y="84" width="20" height="1.600"/></g>
<ellipse cx="104" cy="81" rx="9" ry="2.600" fill="#bdd248"/>
<ellipse cx="32" cy="86" rx="6" ry="2" fill="#a9bf52"/>
<rect x="34" y="86" width="126" height="4" fill="#727f82" opacity=".8"/>
</svg>
<svg style="left:893.4px;top:359.3px;" width="79.3" height="44.9" viewBox="0 0 160 90" preserveAspectRatio="none">
<rect width="160" height="90" fill="url(#gsky2)"/>
<g filter="url(#b1)" fill="#f4f6f8">
<ellipse cx="24" cy="13" rx="13" ry="2.400"/><ellipse cx="6" cy="7.500" rx="6" ry="2.200"/><ellipse cx="20" cy="8" rx="4" ry="1.600"/>
<ellipse cx="37" cy="24.500" rx="10" ry="3"/><ellipse cx="150" cy="29" rx="9" ry="2.200" opacity=".8"/>
<ellipse cx="112" cy="32.500" rx="12" ry="1.800" opacity=".75"/><ellipse cx="92" cy="24.500" rx="5" ry="1.300" opacity=".7"/>
<ellipse cx="6" cy="21.500" rx="5" ry="1.600" opacity=".85"/>
</g>
<polygon points="0,26 5,23 12,25 24,30 46,42 52,48 0,48" fill="#5b7390"/>
<polygon points="44,38 60,35 76,33 89,31 100,34 124,38 140,34 160,27 160,50 44,50" fill="#6a89a9"/>
<polygon points="120,40 140,34 152,30 160,27 160,50 120,50" fill="#55748f"/>
<polygon points="0,38 4,34 8,38 12,33 17,36 21,31 26,37 31,34 36,40 42,41 48,45 52,48 52,54 0,54" fill="#3b5829"/>
<polygon points="138,42 142,37 146,40 151,36 156,38 160,35 160,50 138,50" fill="#35521f"/>
<rect x="48" y="45" width="94" height="5" fill="#4c6a33"/>
<rect y="48.800" width="160" height="41.200" fill="url(#ggrass)"/>
<rect y="52.500" width="52" height="3" fill="#6d8f3a"/>
<ellipse cx="45" cy="58" rx="9" ry="1.200" fill="#4b6624"/>
<circle cx="76.500" cy="58" r="1.200" fill="#2c3a2a"/>
<rect x="53.700" y="32" width="7.500" height="11" rx="2.200" fill="#8c2b36"/>
<rect x="54.300" y="41.500" width="4.800" height="17.500" fill="#27314d"/>
<circle cx="62.500" cy="30" r="2.400" fill="#9a7a66"/>
<rect x="54" y="58" width="6" height="1.600" fill="#c9ccd0"/>
</svg>
<svg style="left:813.3px;top:404.8px;" width="79.6" height="45.2" viewBox="0 0 160 90" preserveAspectRatio="none">
<rect width="160" height="90" fill="url(#gsky3)"/>
<g filter="url(#b2)">
<ellipse cx="40" cy="10.500" rx="22" ry="2.600" fill="#474c76"/>
<ellipse cx="14" cy="17" rx="18" ry="3" fill="#4f547c"/>
<ellipse cx="118" cy="8" rx="40" ry="5" fill="#f2a455"/>
<ellipse cx="150" cy="3" rx="16" ry="4" fill="#c27a36"/>
<ellipse cx="72" cy="20" rx="26" ry="4" fill="#c68a90"/>
<ellipse cx="80" cy="5" rx="20" ry="3" fill="#a07f9a"/>
</g>
<rect y="28" width="90" height="62" fill="url(#gsea3)"/>
<polygon points="0,21 9,22.500 16,19.600 40,20.500 60,24 77,28 77,30 0,30" fill="#48495d"/>
<polygon points="16,50 21,46.500 27,48.500 30,52 24,54" fill="#2d3c52"/>
<polygon points="32,50 38,48 40,56 35,58" fill="#36455c"/>
<polygon points="76,29 90,26.500 102,26 86,44 66,66 40,90 17,90 38,75 31,63 37,48 56,36" fill="#4d4234"/>
<polygon points="60,40 72,33 86,30 80,44 60,58 52,70" fill="#5d5440" opacity=".8"/>
<polygon points="99,27 110,21 122,21 134,18 146,16 160,13 160,90 26,90 42,72 57,61 61,44 84,32" fill="#d9dee9"/>
<polygon points="146,15 160,12 160,30 150,32 144,24" fill="#8a6f60"/>
<polygon points="128.700,51.500 160,50 160,69 128.700,68" fill="#dcc4b8"/>
<polygon points="112,20.800 132.600,20.800 132.600,37 112,37" fill="#f0f2f7"/>
<path d="M87.500,45.700 a15.200,14.600 0 0 1 30.400,0 z" fill="#2a5fca"/>
<path d="M113.800,20.800 a9.400,6.800 0 0 1 18.800,0 z" fill="#2a5fca"/>
<path d="M62,44.700 a6.500,9 0 0 1 13,0 z" fill="#3366cc"/>
<rect x="61" y="44.700" width="70" height="17" fill="#eceff5"/>
<polygon points="61,61 131,61 140,90 40,90" fill="#d3d9e6"/>
<g fill="#8d99b3" opacity=".75"><rect x="66" y="49" width="2.500" height="6"/><rect x="72" y="49" width="2.500" height="6"/><rect x="96" y="51" width="3" height="7"/><rect x="108" y="51" width="3" height="7"/><rect x="60" y="62" width="30" height="2"/><rect x="80" y="70" width="40" height="2"/><rect x="100" y="78" width="30" height="2"/><rect x="136" y="36" width="10" height="3"/><rect x="140" y="44" width="16" height="2"/></g>
<g fill="#2f5fc0"><rect x="116" y="26" width="2.400" height="4"/><rect x="122" y="25" width="2.400" height="4.500"/><rect x="128" y="26" width="2.400" height="4"/><rect x="120" y="34" width="3" height="4.500"/><rect x="54" y="74" width="4" height="6"/><rect x="96" y="78" width="6" height="4"/><rect x="114" y="73" width="7" height="4"/><rect x="100" y="70" width="4" height="4"/></g>
<g fill="#a8836c"><rect x="134" y="24" width="6" height="4"/><rect x="148" y="38" width="8" height="4"/><rect x="128" y="82" width="10" height="4"/><rect x="36" y="84" width="8" height="4"/></g>
<rect x="80" y="82" width="9" height="8" fill="#7c2b3c"/>
<ellipse cx="146" cy="72" rx="15" ry="8.500" fill="#f1f3f8"/>
<rect x="131" y="72" width="29" height="9" fill="#eceff5"/>
</svg>
<svg style="left:893.4px;top:404.8px;" width="79.3" height="45.2" viewBox="0 0 160 90" preserveAspectRatio="none">
<rect width="160" height="90" fill="#edf2e6"/>
<g filter="url(#b3)">
<ellipse cx="44" cy="20" rx="46" ry="18" fill="#86a64e"/>
<ellipse cx="58" cy="42" rx="30" ry="15" fill="#9bb864"/>
<ellipse cx="128" cy="9" rx="36" ry="11" fill="#93b25a"/>
<ellipse cx="146" cy="40" rx="12" ry="22" fill="#b4cb86"/>
<ellipse cx="22" cy="50" rx="16" ry="9" fill="#7f9f48"/>
<ellipse cx="14" cy="78" rx="26" ry="13" fill="#f5f8f1"/>
<ellipse cx="5" cy="18" rx="6" ry="9" fill="#f1f5ea"/>
<ellipse cx="82" cy="6" rx="14" ry="5" fill="#6f9240"/>
<ellipse cx="40" cy="66" rx="14" ry="6" fill="#c5d6a4"/>
</g>
<rect width="160" height="90" filter="url(#fol)" opacity=".55"/>
<rect width="160" height="90" filter="url(#fol2)" opacity=".75"/>
<path d="M147,0 q4,30 2,50 q-2,20 0,40 l3,0 q-2,-22 0,-42 q2,-24 -2,-48z" fill="#8a5a3c"/>
<path d="M92,24 q0,-20 18,-21 q19,0 21,22 q1,14 -5,26 q-4,8 -9,11 l-6,-32 z" fill="#2a2221"/>
<ellipse cx="109.500" cy="36" rx="12.500" ry="17" fill="#e9b595"/>
<path d="M95,30 q5,-16 25,-10 q-10,3 -25,10z" fill="#2a2221"/>
<path d="M101,45.500 q8,5 14,-.5 q-7,2.500 -14,.5z" fill="#fff"/>
<ellipse cx="103.500" cy="33" rx="1.600" ry="1" fill="#3a2a26"/><ellipse cx="114.500" cy="32.500" rx="1.600" ry="1" fill="#3a2a26"/>
<path d="M98,57 l24,-1 l14,12 l6,22 l-56,0 l4,-18 z" fill="#a9b2c4"/>
<path d="M102,53 l15,0 l-1,15 l-13,0 z" fill="#e6b393"/>
<path d="M124,60 l6,3 l-8,27 l-6,0 z" fill="#a4653a"/>
<path d="M40,84 q10,-22 26,-40 q4,-6 10,-2 l4,6 q-14,18 -16,34 q-6,10 -24,6 z" fill="#e8b495"/>
<path d="M128,74 q10,0 10,10 l-2,6 l-14,0 z" fill="#e6b191"/>
<g fill="#8fb136"><ellipse cx="78" cy="66" rx="9.500" ry="22"/><ellipse cx="75" cy="50" rx="7" ry="6"/></g>
<g fill="#b7d25c"><circle cx="75" cy="56" r="3"/><circle cx="81" cy="64" r="3"/><circle cx="76" cy="72" r="3"/><circle cx="82" cy="78" r="3"/><circle cx="74" cy="82" r="2.500"/><circle cx="83" cy="54" r="2.500"/><circle cx="73" cy="64" r="2.500"/><circle cx="80" cy="86" r="2.500"/></g>
<g fill="#6f9126"><circle cx="78" cy="60" r="1.600"/><circle cx="79" cy="69" r="1.600"/><circle cx="77" cy="77" r="1.600"/><circle cx="84" cy="72" r="1.600"/></g>
</svg>
<div style="left:765px;top:452.5px;width:257px;height:20.5px;background:#13202b;"></div>
<svg style="left:772.5px;top:458.5px;" width="8" height="8" viewBox="0 0 8 8"><path d="M1.400,.8 l5.400,3.200 l-5.400,3.200z" fill="#f0f3f6"/></svg>
<div style="left:790.8px;top:460.4px;width:4.3px;height:4.3px;background:#f0f3f6;"></div>
<span class="t" style="left:805.00px;top:457.00px;font-size:7.4px;line-height:11.4px;color:#d2d9e0;letter-spacing:-0.294px;">TimeLine:00:00:00:000</span>
<span class="t" style="left:881.00px;top:457.00px;font-size:7.4px;line-height:11.4px;color:#d2d9e0;letter-spacing:-0.166px;">Brightness:0</span>
<div style="left:929px;top:458.3px;width:50px;height:8.4px;background:#1f2b37;"></div>
<svg style="left:988.5px;top:458.2px;" width="10" height="9" viewBox="0 0 10 9"><path d="M1,3.400 h1.500 l2,-1.800 v5.800 l-2,-1.800 h-1.500z" fill="none" stroke="#c4ccd4" stroke-width=".8" stroke-linejoin="round"/><path d="M6,2.200 q1.500,2.300 0,4.600" fill="none" stroke="#c4ccd4" stroke-width=".8" stroke-linecap="round"/><path d="M7,1.800 q2.200,2.700 0,5.400z" fill="#c4ccd4"/></svg>
<svg style="left:1005px;top:458px;" width="10" height="10" viewBox="0 0 10 10"><path d="M5.600,2 h2.400 v2.400 M8,2 l-2.500,2.500 M4.400,8 h-2.400 v-2.400 M2,8 l2.500,-2.500 M2,3.600 v-1.600 h1.600 M8,6.400 v1.600 h-1.600" fill="none" stroke="#e6ebf0" stroke-width=".9" stroke-linecap="round" stroke-linejoin="round"/></svg>
<div style="left:134px;top:473px;width:888px;height:15px;background:#0c1923;"></div>
<div style="left:150px;top:475.2px;width:30.5px;height:11px;background:#4f411f;box-sizing:border-box;border:1px solid #7d652c;border-radius:2px;"></div>
<span class="t" style="left:161.50px;top:475.00px;font-size:7.4px;line-height:11.4px;color:#c9b88c;letter-spacing:-0.362px;">Mode</span>
<span class="t" style="left:183.00px;top:474.90px;font-size:7.6px;line-height:11.6px;color:#d2d9e0;letter-spacing:-0.436px;">Version: Pilot MS3 Pro V2.5.0.T1</span>
<span class="t" style="left:815.50px;top:474.90px;font-size:7.6px;line-height:11.6px;color:#d2d9e0;letter-spacing:-0.545px;">Local</span>
<div style="left:834px;top:475.4px;width:38.5px;height:10.8px;background:#2a3440;"></div>
<span class="t" style="left:836.00px;top:475.00px;font-size:7.4px;line-height:11.4px;color:#d2d9e0;letter-spacing:-0.360px;">10.40.91.12</span>
<span class="t" style="left:877.00px;top:474.90px;font-size:7.6px;line-height:11.6px;color:#d2d9e0;letter-spacing:-0.391px;">Name:</span>
<div style="left:899px;top:475.4px;width:81.5px;height:10.8px;background:#2a3440;"></div>
<span class="t" style="left:901.00px;top:475.00px;font-size:7.4px;line-height:11.4px;color:#d2d9e0;letter-spacing:-0.239px;">202110290006-P(Editing)</span>
<div style="left:982.8px;top:475.4px;width:36.5px;height:10.8px;background:#4a525b;"></div>
<span class="t" style="left:985.50px;top:475.00px;font-size:7.4px;line-height:11.4px;color:#e6ebf0;letter-spacing:-0.297px;">Update</span>
<svg style="left:1008.5px;top:476.8px;" width="8" height="8" viewBox="0 0 8 8"><circle cx="4" cy="4" r="3.200" fill="none" stroke="#e6ebf0" stroke-width=".8"/><circle cx="4" cy="4" r="1.200" fill="#e6ebf0"/></svg>
</div></div>
<div id="ov">
<svg style="left:-9px;top:308px" width="190" height="190" viewBox="-10 -10 190 190">
<defs>
<linearGradient id="bg0" x1="0" y1=".1" x2="1" y2=".62"><stop offset="0" stop-color="#e046b4"/><stop offset=".4" stop-color="#cd4eba"/><stop offset=".57" stop-color="#955dc8"/><stop offset=".76" stop-color="#5d6dd6"/><stop offset="1" stop-color="#4878de"/></linearGradient>
<radialGradient id="bg1" cx=".03" cy=".98" r=".58"><stop offset="0" stop-color="#d649b8"/><stop offset=".55" stop-color="#cb4fba" stop-opacity=".75"/><stop offset="1" stop-color="#c552ba" stop-opacity="0"/></radialGradient>
<radialGradient id="bg2" cx=".98" cy=".02" r=".55"><stop offset="0" stop-color="#4e60d4"/><stop offset=".6" stop-color="#6068d4" stop-opacity=".6"/><stop offset="1" stop-color="#6a6cd4" stop-opacity="0"/></radialGradient>
<radialGradient id="bg3" cx=".5" cy="1" r=".3"><stop offset="0" stop-color="#5a70da" stop-opacity=".8"/><stop offset="1" stop-color="#5a70da" stop-opacity="0"/></radialGradient>
<filter id="cl" x="0" y="0" width="100%" height="100%"><feTurbulence type="fractalNoise" baseFrequency="0.028" numOctaves="5" seed="7"/><feColorMatrix type="matrix" values="0 0 0 0 .32  0 0 0 0 .24  0 0 0 0 .68  3.200 0 0 0 -1.250"/></filter>
<filter id="cl2" x="0" y="0" width="100%" height="100%"><feTurbulence type="fractalNoise" baseFrequency="0.03" numOctaves="5" seed="23"/><feColorMatrix type="matrix" values="0 0 0 0 .82  0 0 0 0 .25  0 0 0 0 .68  0 3.200 0 0 -1.500"/></filter>
<filter id="sh" x="-10%" y="-10%" width="120%" height="125%"><feGaussianBlur stdDeviation="2.600"/></filter>
<clipPath id="lc"><rect x="1.200" y="1.400" width="164.300" height="164.300" rx="10.200"/></clipPath>
</defs>
<rect x="2" y="5" width="164" height="165" rx="12" fill="#000" opacity=".3" filter="url(#sh)"/>
<rect x="-.1" y=".1" width="167" height="167" rx="11.500" fill="#efeadf"/>
<g clip-path="url(#lc)">
<rect x="1" y="1" width="166" height="166" fill="url(#bg0)"/>
<rect x="1" y="1" width="166" height="166" fill="url(#bg2)"/>
<rect x="1" y="1" width="166" height="166" fill="url(#bg1)"/>
<rect x="1" y="1" width="166" height="166" fill="url(#bg3)"/>
<rect x="1" y="1" width="166" height="166" filter="url(#cl)" opacity=".42"/>
<rect x="1" y="1" width="166" height="166" filter="url(#cl2)" opacity=".42"/>
</g>
<path transform="translate(-1,-318)" d="M23.300,416 L54.500,358.500 Q66,346.500 77.500,358.500 L101,400 L109,386 Q120,373.500 131,386 L147.500,415 L133.500,441 L120.400,419.600 L114.500,431.500 Q103,446.500 91.500,432.500 L66,391.800 L37.700,441.300 Z" fill="#fff"/>
</svg>
</div>
</body></html>
